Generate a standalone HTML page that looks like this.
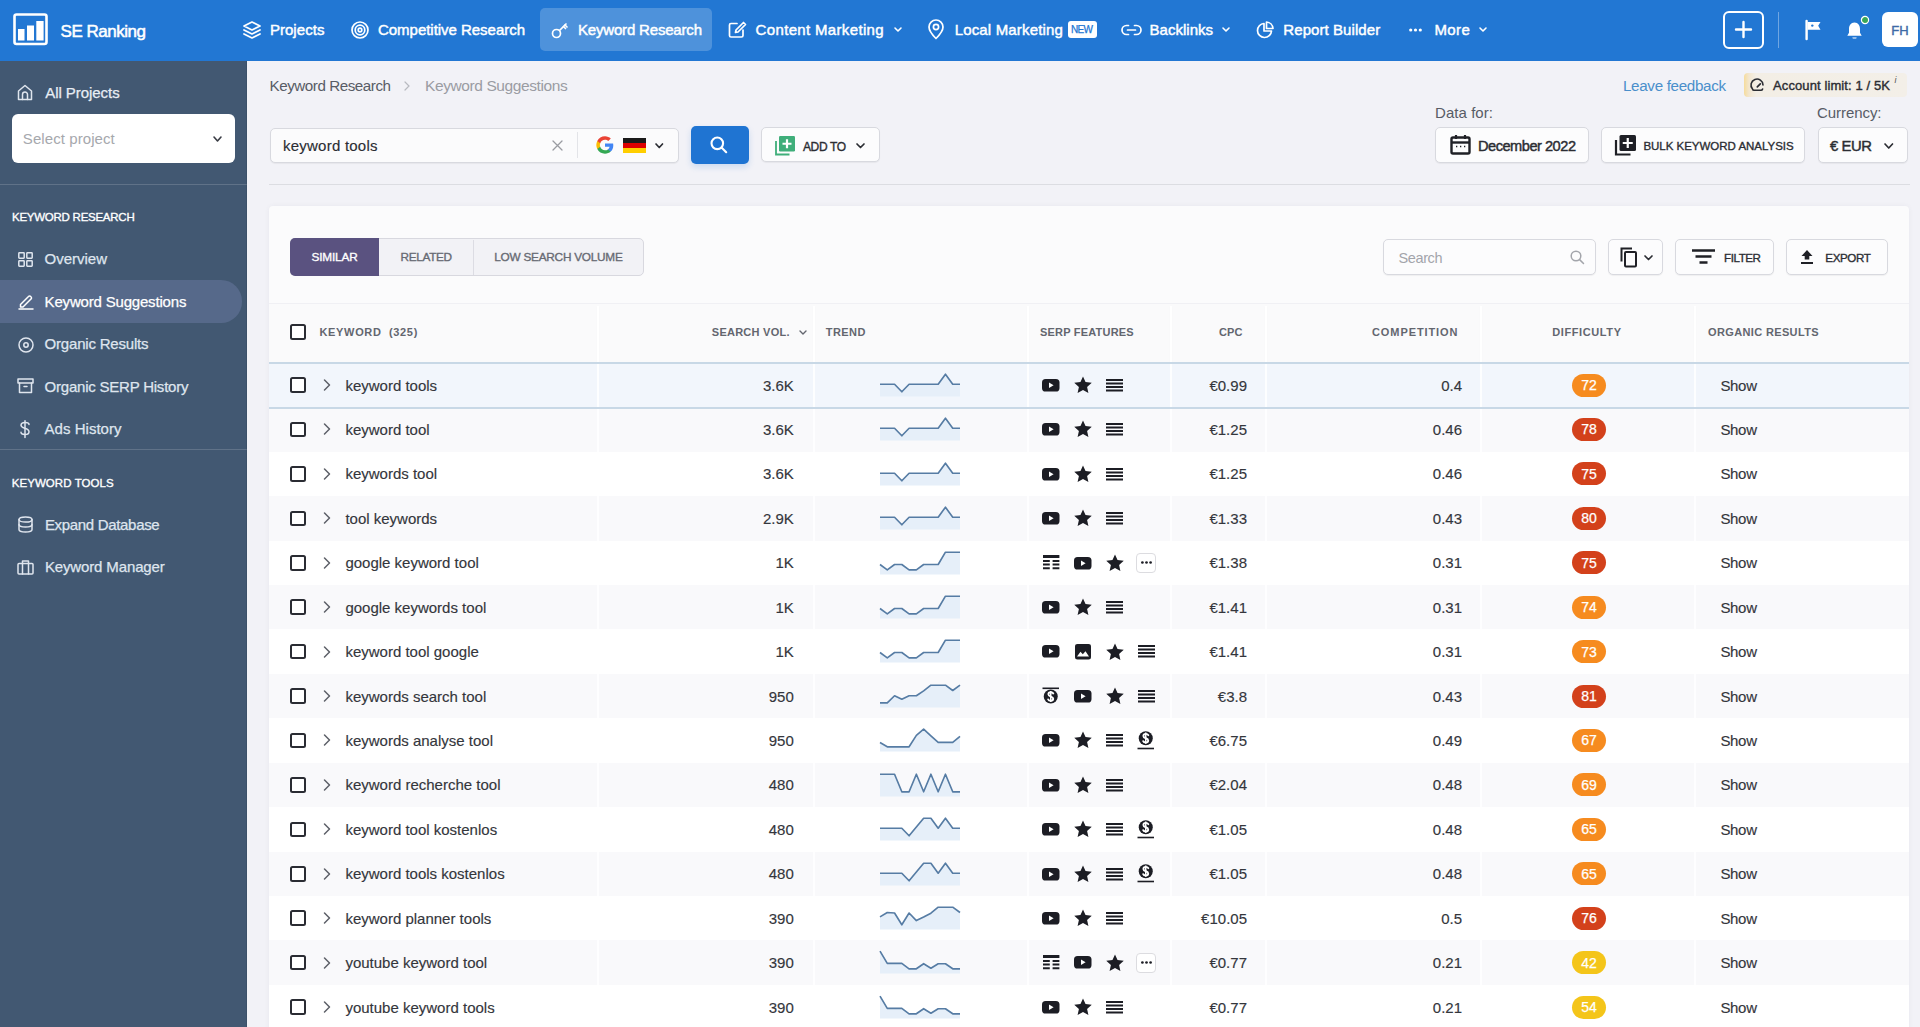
<!DOCTYPE html>
<html><head><meta charset="utf-8"><title>SE Ranking - Keyword Suggestions</title>
<style>
html,body{margin:0;padding:0;}
body{width:1920px;height:1027px;overflow:hidden;position:relative;background:#f2f2f7;font-family:"Liberation Sans",sans-serif;}
svg{display:block;overflow:visible}
</style></head><body>
<div style="position:absolute;left:0px;top:0px;width:1920px;height:61px;background:#2277d3"></div><svg style="position:absolute;left:13px;top:13px;" width="36" height="33" viewBox="0 0 36 33"><rect x="1.5" y="1.5" width="32" height="29.5" rx="2" fill="none" stroke="#fff" stroke-width="2.6"/><rect x="5" y="16" width="6.5" height="11.5" fill="#fff"/><rect x="14" y="12.5" width="7" height="15" fill="#fff"/><rect x="23.3" y="8" width="7.3" height="19.5" fill="#fff"/></svg><span style="position:absolute;left:60.60px;top:23.00px;font-size:17px;line-height:17px;font-weight:400;color:#fff;-webkit-text-stroke:0.51px #fff;letter-spacing:-0.487px;white-space:pre;">SE Ranking</span><div style="position:absolute;left:540px;top:8px;width:172px;height:42.5px;background:rgba(255,255,255,0.2);border-radius:5px"></div><span style="position:absolute;left:269.90px;top:22.00px;font-size:15px;line-height:15px;font-weight:400;color:#fff;-webkit-text-stroke:0.45px #fff;letter-spacing:0.045px;white-space:pre;">Projects</span><span style="position:absolute;left:378.00px;top:22.00px;font-size:15px;line-height:15px;font-weight:400;color:#fff;-webkit-text-stroke:0.45px #fff;letter-spacing:-0.030px;white-space:pre;">Competitive Research</span><span style="position:absolute;left:578.00px;top:22.00px;font-size:15px;line-height:15px;font-weight:400;color:#fff;-webkit-text-stroke:0.45px #fff;letter-spacing:-0.182px;white-space:pre;">Keyword Research</span><span style="position:absolute;left:755.60px;top:22.00px;font-size:15px;line-height:15px;font-weight:400;color:#fff;-webkit-text-stroke:0.45px #fff;letter-spacing:0.339px;white-space:pre;">Content Marketing</span><span style="position:absolute;left:954.70px;top:22.00px;font-size:15px;line-height:15px;font-weight:400;color:#fff;-webkit-text-stroke:0.45px #fff;letter-spacing:0.158px;white-space:pre;">Local Marketing</span><span style="position:absolute;left:1149.60px;top:22.00px;font-size:15px;line-height:15px;font-weight:400;color:#fff;-webkit-text-stroke:0.45px #fff;letter-spacing:0.005px;white-space:pre;">Backlinks</span><span style="position:absolute;left:1283.30px;top:22.00px;font-size:15px;line-height:15px;font-weight:400;color:#fff;-webkit-text-stroke:0.45px #fff;letter-spacing:0.078px;white-space:pre;">Report Builder</span><span style="position:absolute;left:1434.40px;top:22.00px;font-size:15px;line-height:15px;font-weight:400;color:#fff;-webkit-text-stroke:0.45px #fff;letter-spacing:0.404px;white-space:pre;">More</span><svg style="position:absolute;left:242px;top:20px;" width="20" height="20" viewBox="0 0 20 20"><path d="M10 2 L18 6 L10 10 L2 6 Z" fill="none" stroke="#fff" stroke-width="1.7" stroke-linecap="round" stroke-linejoin="round"/><path d="M2 10 L10 14 L18 10" fill="none" stroke="#fff" stroke-width="1.7" stroke-linecap="round" stroke-linejoin="round"/><path d="M2 14 L10 18 L18 14" fill="none" stroke="#fff" stroke-width="1.7" stroke-linecap="round" stroke-linejoin="round"/></svg><svg style="position:absolute;left:351px;top:21px;" width="18" height="18" viewBox="0 0 18 18"><circle cx="9" cy="9" r="8" fill="none" stroke="#fff" stroke-width="1.7" stroke-linecap="round" stroke-linejoin="round"/><circle cx="9" cy="9" r="4.8" fill="none" stroke="#fff" stroke-width="1.7" stroke-linecap="round" stroke-linejoin="round"/><circle cx="9" cy="9" r="1.8" fill="none" stroke="#fff" stroke-width="1.7" stroke-linecap="round" stroke-linejoin="round"/></svg><svg style="position:absolute;left:551px;top:21px;" width="18" height="18" viewBox="0 0 18 18"><circle cx="5.5" cy="12.5" r="4" fill="none" stroke="#fff" stroke-width="1.7" stroke-linecap="round" stroke-linejoin="round"/><path d="M8.5 9.5 L15 3" fill="none" stroke="#fff" stroke-width="1.7" stroke-linecap="round" stroke-linejoin="round"/><path d="M12.5 5.5 L14.5 7.5" fill="none" stroke="#fff" stroke-width="1.7" stroke-linecap="round" stroke-linejoin="round"/><path d="M14 4 L16 6" fill="none" stroke="#fff" stroke-width="1.7" stroke-linecap="round" stroke-linejoin="round"/></svg><svg style="position:absolute;left:728px;top:21px;" width="19" height="17" viewBox="0 0 19 17"><path d="M9 2.5 H3 a1.5 1.5 0 0 0 -1.5 1.5 V14.5 a1.5 1.5 0 0 0 1.5 1.5 H13.5 a1.5 1.5 0 0 0 1.5 -1.5 V9" fill="none" stroke="#fff" stroke-width="1.7" stroke-linecap="round" stroke-linejoin="round"/><path d="M15.5 1.5 L17.5 3.5 L10 11 L7.5 11.5 L8 9 Z" fill="none" stroke="#fff" stroke-width="1.7" stroke-linecap="round" stroke-linejoin="round"/></svg><svg style="position:absolute;left:893.5px;top:27px;" width="8" height="5" viewBox="0 0 8 5"><path d="M1 1 L4.0 4 L7 1" fill="none" stroke="#fff" stroke-width="1.6" stroke-linecap="round" stroke-linejoin="round"/></svg><svg style="position:absolute;left:1221.8px;top:27px;" width="8" height="5" viewBox="0 0 8 5"><path d="M1 1 L4.0 4 L7 1" fill="none" stroke="#fff" stroke-width="1.6" stroke-linecap="round" stroke-linejoin="round"/></svg><svg style="position:absolute;left:1479.2px;top:27px;" width="8" height="5" viewBox="0 0 8 5"><path d="M1 1 L4.0 4 L7 1" fill="none" stroke="#fff" stroke-width="1.6" stroke-linecap="round" stroke-linejoin="round"/></svg><svg style="position:absolute;left:927px;top:19px;" width="18" height="21" viewBox="0 0 18 21"><path d="M9 19.5 C9 19.5 2 12.5 2 8 a7 7 0 0 1 14 0 C16 12.5 9 19.5 9 19.5 Z" fill="none" stroke="#fff" stroke-width="1.7" stroke-linecap="round" stroke-linejoin="round"/><circle cx="9" cy="8" r="2.6" fill="none" stroke="#fff" stroke-width="1.7" stroke-linecap="round" stroke-linejoin="round"/></svg><div style="position:absolute;left:1067.5px;top:21.3px;width:29px;height:16.6px;background:#fff;border-radius:3px"></div><span style="position:absolute;left:1071.00px;top:25.00px;font-size:10px;line-height:10px;font-weight:400;color:#2277d3;-webkit-text-stroke:0.25px #2277d3;letter-spacing:-0.672px;white-space:pre;">NEW</span><svg style="position:absolute;left:1121px;top:24px;" width="21" height="12" viewBox="0 0 21 12"><path d="M7.5 1.5 H5.5 a4.5 4.5 0 0 0 0 9 H7.5" fill="none" stroke="#fff" stroke-width="1.7" stroke-linecap="round" stroke-linejoin="round"/><path d="M13.5 1.5 H15.5 a4.5 4.5 0 0 1 0 9 H13.5" fill="none" stroke="#fff" stroke-width="1.7" stroke-linecap="round" stroke-linejoin="round"/><path d="M6.5 6 H14.5" fill="none" stroke="#fff" stroke-width="1.7" stroke-linecap="round" stroke-linejoin="round"/></svg><svg style="position:absolute;left:1256px;top:21px;" width="18" height="18" viewBox="0 0 18 18"><path d="M8 2.5 A7 7 0 1 0 15.5 10 H8 Z" fill="none" stroke="#fff" stroke-width="1.7" stroke-linecap="round" stroke-linejoin="round"/><path d="M10.5 1 A7 7 0 0 1 17 7.5 H10.5 Z" fill="none" stroke="#fff" stroke-width="1.7" stroke-linecap="round" stroke-linejoin="round"/></svg><svg style="position:absolute;left:1409px;top:27.5px;" width="13" height="4" viewBox="0 0 13 4"><circle cx="1.7" cy="2" r="1.6" fill="#fff"/><circle cx="6.5" cy="2" r="1.6" fill="#fff"/><circle cx="11.3" cy="2" r="1.6" fill="#fff"/></svg><div style="position:absolute;left:1722.5px;top:10.5px;width:41.5px;height:38px;box-sizing:border-box;border:2.5px solid #fff;border-radius:6px"></div><svg style="position:absolute;left:1735px;top:21px;" width="17" height="17" viewBox="0 0 17 17"><path d="M8.5 1 V16 M1 8.5 H16" stroke="#fff" stroke-width="2.4" stroke-linecap="round"/></svg><div style="position:absolute;left:1777.5px;top:11.5px;width:1.2px;height:36px;background:rgba(255,255,255,0.35)"></div><svg style="position:absolute;left:1805px;top:20px;" width="16" height="20" viewBox="0 0 16 20"><path d="M1.6 1 V19" stroke="#fff" stroke-width="2.4" stroke-linecap="round"/><path d="M2.5 2 H15.5 L13.2 5.8 L15.5 9.8 H2.5 Z" fill="#fff"/><circle cx="7.3" cy="5.6" r="1.2" fill="#2277d3"/></svg><svg style="position:absolute;left:1846px;top:20.5px;" width="17" height="19" viewBox="0 0 17 19"><path d="M8.5 1.5 C4.8 1.5 3 4.5 3 8 V11.8 L1.3 14.8 H15.7 L14 11.8 V8 C14 4.5 12.2 1.5 8.5 1.5 Z" fill="#fff"/><path d="M6.3 16.4 H10.7 L10.2 17.6 H6.8 Z" fill="#fff"/></svg><svg style="position:absolute;left:1860px;top:15px;" width="10" height="10" viewBox="0 0 10 10"><circle cx="5" cy="5" r="3.6" fill="#3aa757" stroke="#fff" stroke-width="1.2"/></svg><div style="position:absolute;left:1882.3px;top:11.5px;width:35.5px;height:35.8px;background:#fff;border-radius:6px"></div><span style="position:absolute;left:1891.33px;top:24.00px;font-size:13px;line-height:13px;font-weight:400;color:#3d6aa6;-webkit-text-stroke:0.39px #3d6aa6;letter-spacing:0.000px;white-space:pre;">FH</span><div style="position:absolute;left:0px;top:61px;width:247px;height:966px;background:#425872"></div><svg style="position:absolute;left:17px;top:84px;" width="16" height="17" viewBox="0 0 16 17"><path d="M1.5 7 L8 1.5 L14.5 7 V15.5 H1.5 Z" fill="none" stroke="#dfe5ee" stroke-width="1.5" stroke-linecap="round" stroke-linejoin="round"/><path d="M5.5 15.5 V10.5 a2.5 2.5 0 0 1 5 0 V15.5" fill="none" stroke="#dfe5ee" stroke-width="1.5" stroke-linecap="round" stroke-linejoin="round"/></svg><span style="position:absolute;left:45.20px;top:85.00px;font-size:15px;line-height:15px;font-weight:400;color:#e8edf4;-webkit-text-stroke:0.25px #e8edf4;letter-spacing:-0.048px;white-space:pre;">All Projects</span><div style="position:absolute;left:12px;top:114.3px;width:222.6px;height:48.3px;background:#fff;border-radius:6px"></div><span style="position:absolute;left:22.80px;top:131.00px;font-size:15px;line-height:15px;font-weight:400;color:#a6a8ad;letter-spacing:0.085px;white-space:pre;">Select project</span><svg style="position:absolute;left:213px;top:136px;" width="9" height="6" viewBox="0 0 9 6"><path d="M1 1 L4.5 5 L8 1" fill="none" stroke="#3a3d45" stroke-width="1.6" stroke-linecap="round" stroke-linejoin="round"/></svg><div style="position:absolute;left:0px;top:184px;width:247px;height:1px;background:rgba(255,255,255,0.16)"></div><span style="position:absolute;left:12.00px;top:212.00px;font-size:11.5px;line-height:11.5px;font-weight:400;color:#fff;-webkit-text-stroke:0.34px #fff;letter-spacing:-0.255px;white-space:pre;">KEYWORD RESEARCH</span><div style="position:absolute;left:0px;top:280.4px;width:242px;height:42.4px;background:#56698a;border-radius:0 21px 21px 0"></div><span style="position:absolute;left:44.60px;top:251.00px;font-size:15px;line-height:15px;font-weight:400;color:#dfe5ee;-webkit-text-stroke:0.25px #dfe5ee;letter-spacing:-0.017px;white-space:pre;">Overview</span><span style="position:absolute;left:44.60px;top:294.00px;font-size:15px;line-height:15px;font-weight:400;color:#fff;-webkit-text-stroke:0.25px #fff;letter-spacing:-0.183px;white-space:pre;">Keyword Suggestions</span><span style="position:absolute;left:44.60px;top:336.00px;font-size:15px;line-height:15px;font-weight:400;color:#dfe5ee;-webkit-text-stroke:0.25px #dfe5ee;letter-spacing:-0.201px;white-space:pre;">Organic Results</span><span style="position:absolute;left:44.60px;top:379.00px;font-size:15px;line-height:15px;font-weight:400;color:#dfe5ee;-webkit-text-stroke:0.25px #dfe5ee;letter-spacing:-0.222px;white-space:pre;">Organic SERP History</span><span style="position:absolute;left:44.60px;top:421.00px;font-size:15px;line-height:15px;font-weight:400;color:#dfe5ee;-webkit-text-stroke:0.25px #dfe5ee;letter-spacing:0.021px;white-space:pre;">Ads History</span><svg style="position:absolute;left:18px;top:252px;" width="15" height="15" viewBox="0 0 15 15"><rect x="0.8" y="0.8" width="5.4" height="5.4" rx="0.6" fill="none" stroke="#dfe5ee" stroke-width="1.5" stroke-linecap="round" stroke-linejoin="round"/><rect x="8.8" y="0.8" width="5.4" height="5.4" rx="0.6" fill="none" stroke="#dfe5ee" stroke-width="1.5" stroke-linecap="round" stroke-linejoin="round"/><rect x="0.8" y="8.8" width="5.4" height="5.4" rx="0.6" fill="none" stroke="#dfe5ee" stroke-width="1.5" stroke-linecap="round" stroke-linejoin="round"/><rect x="8.8" y="8.8" width="5.4" height="5.4" rx="0.6" fill="none" stroke="#dfe5ee" stroke-width="1.5" stroke-linecap="round" stroke-linejoin="round"/></svg><svg style="position:absolute;left:17.5px;top:293px;" width="16" height="17" viewBox="0 0 16 17"><path d="M2.5 11.5 L10.5 3.5 a1.5 1.5 0 0 1 2.2 0 L13 3.8 a1.5 1.5 0 0 1 0 2.2 L5 14 H2.5 Z" fill="none" stroke="#fff" stroke-width="1.5" stroke-linecap="round" stroke-linejoin="round"/><path d="M1 16 H15" fill="none" stroke="#fff" stroke-width="1.5" stroke-linecap="round" stroke-linejoin="round"/></svg><svg style="position:absolute;left:17.5px;top:336.5px;" width="16" height="16" viewBox="0 0 16 16"><circle cx="8" cy="8" r="7" fill="none" stroke="#dfe5ee" stroke-width="1.5" stroke-linecap="round" stroke-linejoin="round"/><circle cx="8" cy="8" r="2.2" fill="none" stroke="#dfe5ee" stroke-width="1.5" stroke-linecap="round" stroke-linejoin="round"/></svg><svg style="position:absolute;left:17px;top:378px;" width="17" height="16" viewBox="0 0 17 16"><rect x="1" y="1" width="15" height="4" fill="none" stroke="#dfe5ee" stroke-width="1.5" stroke-linecap="round" stroke-linejoin="round"/><path d="M2.5 5 V14.5 H14.5 V5" fill="none" stroke="#dfe5ee" stroke-width="1.5" stroke-linecap="round" stroke-linejoin="round"/><path d="M7 8.5 H10" fill="none" stroke="#dfe5ee" stroke-width="1.5" stroke-linecap="round" stroke-linejoin="round"/></svg><svg style="position:absolute;left:19px;top:420px;" width="12" height="19" viewBox="0 0 12 19"><path d="M10 4.5 C10 3 8.5 2.5 6 2.5 C3.5 2.5 2 3.5 2 5.3 C2 9 10 7.5 10 11.7 C10 13.7 8.5 14.5 6 14.5 C3.5 14.5 2 13.8 2 12.3" fill="none" stroke="#dfe5ee" stroke-width="1.5" stroke-linecap="round" stroke-linejoin="round"/><path d="M6 0.8 V17.5" fill="none" stroke="#dfe5ee" stroke-width="1.5" stroke-linecap="round" stroke-linejoin="round"/></svg><div style="position:absolute;left:0px;top:449.2px;width:247px;height:1px;background:rgba(255,255,255,0.16)"></div><span style="position:absolute;left:11.70px;top:478.00px;font-size:11.5px;line-height:11.5px;font-weight:400;color:#fff;-webkit-text-stroke:0.34px #fff;letter-spacing:0.068px;white-space:pre;">KEYWORD TOOLS</span><span style="position:absolute;left:44.90px;top:517.00px;font-size:15px;line-height:15px;font-weight:400;color:#dfe5ee;-webkit-text-stroke:0.25px #dfe5ee;letter-spacing:-0.319px;white-space:pre;">Expand Database</span><span style="position:absolute;left:44.90px;top:559.00px;font-size:15px;line-height:15px;font-weight:400;color:#dfe5ee;-webkit-text-stroke:0.25px #dfe5ee;letter-spacing:-0.131px;white-space:pre;">Keyword Manager</span><svg style="position:absolute;left:17.5px;top:516px;" width="15" height="17" viewBox="0 0 15 17"><ellipse cx="7.5" cy="3.5" rx="6.5" ry="2.6" fill="none" stroke="#dfe5ee" stroke-width="1.5" stroke-linecap="round" stroke-linejoin="round"/><path d="M1 3.5 V13.5 C1 15 4 16 7.5 16 C11 16 14 15 14 13.5 V3.5" fill="none" stroke="#dfe5ee" stroke-width="1.5" stroke-linecap="round" stroke-linejoin="round"/><path d="M1 8.5 C1 10 4 11 7.5 11 C11 11 14 10 14 8.5" fill="none" stroke="#dfe5ee" stroke-width="1.5" stroke-linecap="round" stroke-linejoin="round"/></svg><svg style="position:absolute;left:17px;top:560px;" width="17" height="15" viewBox="0 0 17 15"><rect x="1" y="3.5" width="15" height="10.5" rx="1" fill="none" stroke="#dfe5ee" stroke-width="1.5" stroke-linecap="round" stroke-linejoin="round"/><path d="M5.5 3.5 V1 H11.5 V3.5" fill="none" stroke="#dfe5ee" stroke-width="1.5" stroke-linecap="round" stroke-linejoin="round"/><path d="M5.5 3.5 V14 M11.5 3.5 V14" fill="none" stroke="#dfe5ee" stroke-width="1.5" stroke-linecap="round" stroke-linejoin="round"/></svg><div style="position:absolute;left:246px;top:61px;width:1px;height:966px;background:rgba(0,0,0,0.08)"></div><span style="position:absolute;left:269.50px;top:78.00px;font-size:15.2px;line-height:15.2px;font-weight:400;color:#585c66;letter-spacing:-0.454px;white-space:pre;">Keyword Research</span><svg style="position:absolute;left:403.5px;top:80.5px;" width="6" height="10" viewBox="0 0 6 10"><path d="M1 1 L5 5 L1 9" fill="none" stroke="#b8bac0" stroke-width="1.2" stroke-linecap="round"/></svg><span style="position:absolute;left:425.00px;top:78.00px;font-size:15.5px;line-height:15.5px;font-weight:400;color:#9a9ca3;letter-spacing:-0.401px;white-space:pre;">Keyword Suggestions</span><div style="position:absolute;left:269.8px;top:127.5px;width:409.5px;height:35.2px;box-sizing:border-box;background:#fbfbfc;border:1.3px solid #d8d9df;border-radius:5px;box-shadow:0 1px 1px rgba(0,0,0,0.05)"></div><span style="position:absolute;left:283.00px;top:138.00px;font-size:15px;line-height:15px;font-weight:400;color:#2b2d33;-webkit-text-stroke:0.15px #2b2d33;letter-spacing:0.232px;white-space:pre;">keyword tools</span><svg style="position:absolute;left:552px;top:139.5px;" width="11" height="11" viewBox="0 0 11 11"><path d="M1 1 L10 10 M10 1 L1 10" stroke="#9a9ca2" stroke-width="1.3" stroke-linecap="round"/></svg><div style="position:absolute;left:577px;top:132px;width:1px;height:26px;background:#e3e4e8"></div><svg style="position:absolute;left:595.5px;top:136px;" width="18" height="18" viewBox="0 0 18 18"><path d="M17.3 9.2 c0-.6-.1-1.2-.2-1.8 H9 v3.4 h4.6 c-.2 1.1-.8 2-1.7 2.6 v2.2 h2.8 c1.6-1.5 2.6-3.7 2.6-6.4z" fill="#4285F4"/><path d="M9 17.7 c2.3 0 4.3-.8 5.7-2.1 l-2.8-2.2 c-.8.5-1.8.9-2.9.9-2.2 0-4.1-1.5-4.8-3.5 H1.3 v2.3 C2.7 16 5.6 17.7 9 17.7z" fill="#34A853"/><path d="M4.2 10.8 c-.2-.5-.3-1.1-.3-1.8 s.1-1.2.3-1.8 V5 H1.3 C.7 6.2.3 7.6.3 9 s.4 2.8 1 4 l2.9-2.2z" fill="#FBBC05"/><path d="M9 3.8 c1.3 0 2.4.4 3.3 1.3 l2.5-2.5 C13.3 1.2 11.3.3 9 .3 5.6.3 2.7 2 1.3 5 l2.9 2.2 C4.9 5.3 6.8 3.8 9 3.8z" fill="#EA4335"/></svg><div style="position:absolute;left:623px;top:137.5px;width:22.5px;height:5px;background:#1a1a1a"></div><div style="position:absolute;left:623px;top:142.5px;width:22.5px;height:5px;background:#dd0000"></div><div style="position:absolute;left:623px;top:147.5px;width:22.5px;height:5px;background:#ffce00"></div><svg style="position:absolute;left:654.8px;top:142.5px;" width="8.5" height="5.5" viewBox="0 0 8.5 5.5"><path d="M1 1 L4.25 4.5 L7.5 1" fill="none" stroke="#2b2d33" stroke-width="1.7" stroke-linecap="round" stroke-linejoin="round"/></svg><div style="position:absolute;left:691px;top:125.8px;width:58px;height:37.8px;background:#1f74d2;border-radius:5px;box-shadow:0 3px 6px rgba(31,116,210,0.18)"></div><svg style="position:absolute;left:708.5px;top:134.5px;" width="21" height="21" viewBox="0 0 21 21"><circle cx="8.3" cy="8.3" r="5.8" fill="none" stroke="#fff" stroke-width="2.1"/><path d="M12.5 12.5 L17.2 17.2" stroke="#fff" stroke-width="2.1" stroke-linecap="round"/></svg><div style="position:absolute;left:760.8px;top:127px;width:119.2px;height:35.4px;box-sizing:border-box;background:#fcfcfd;border:1.3px solid #d8d9df;border-radius:5px;box-shadow:0 1px 1px rgba(0,0,0,0.05)"></div><svg style="position:absolute;left:773.5px;top:134.5px;" width="22" height="21" viewBox="0 0 22 21"><path d="M2 6 V19.5 H15.5" fill="none" stroke="#3fae7a" stroke-width="1.8"/><rect x="5" y="1" width="16" height="15.5" rx="1.2" fill="#3fae7a"/><path d="M13 4.3 V13.2 M8.5 8.75 H17.5" stroke="#fff" stroke-width="2.2"/></svg><span style="position:absolute;left:803.00px;top:141.00px;font-size:12px;line-height:12px;font-weight:400;color:#2b2d33;-webkit-text-stroke:0.36px #2b2d33;letter-spacing:-0.381px;white-space:pre;">ADD TO</span><svg style="position:absolute;left:856px;top:142.5px;" width="9" height="5.5" viewBox="0 0 9 5.5"><path d="M1 1 L4.5 4.5 L8 1" fill="none" stroke="#2b2d33" stroke-width="1.7" stroke-linecap="round" stroke-linejoin="round"/></svg><span style="position:absolute;left:1623.00px;top:78.00px;font-size:15.2px;line-height:15.2px;font-weight:400;color:#4a8fcb;letter-spacing:-0.327px;white-space:pre;">Leave feedback</span><div style="position:absolute;left:1744px;top:72.5px;width:163px;height:24.2px;background:linear-gradient(90deg,#f6dc9c 0px,#f2e6cf 5px,#f3eee5 12px,#f3efe8 100%);border-radius:4px"></div><svg style="position:absolute;left:1749.5px;top:78px;" width="15" height="14" viewBox="0 0 15 14"><path d="M13 7 A6 6 0 1 0 2.5 11 Q2.8 12.3 4 12.3 H11 Q12.2 12.3 12.6 11" fill="none" stroke="#2b2d33" stroke-width="1.6" stroke-linejoin="round" stroke-linecap="round"/><path d="M7.3 8.8 L10.3 5.8" stroke="#2b2d33" stroke-width="1.7" stroke-linecap="round"/></svg><span style="position:absolute;left:1773.00px;top:79.00px;font-size:13px;line-height:13px;font-weight:400;color:#2b2d33;-webkit-text-stroke:0.39px #2b2d33;letter-spacing:0.105px;white-space:pre;">Account limit: 1 / 5K</span><span style="position:absolute;left:1894.50px;top:76.00px;font-size:9px;line-height:9px;font-weight:400;color:#555;letter-spacing:0.000px;white-space:pre;font-style:italic">i</span><span style="position:absolute;left:1435.00px;top:105.00px;font-size:15px;line-height:15px;font-weight:400;color:#585c66;letter-spacing:0.059px;white-space:pre;">Data for:</span><span style="position:absolute;left:1817.00px;top:105.00px;font-size:15px;line-height:15px;font-weight:400;color:#585c66;letter-spacing:-0.066px;white-space:pre;">Currency:</span><div style="position:absolute;left:1435px;top:127px;width:153.8px;height:35.7px;box-sizing:border-box;background:#fcfcfd;border:1.3px solid #d8d9df;border-radius:5px;box-shadow:0 1px 1px rgba(0,0,0,0.05)"></div><svg style="position:absolute;left:1449.5px;top:134px;" width="21" height="21" viewBox="0 0 21 21"><rect x="1.5" y="3.5" width="18" height="16" rx="1.5" fill="none" stroke="#1f2026" stroke-width="2.4"/><path d="M1.5 8.5 H19.5" stroke="#1f2026" stroke-width="2.4"/><path d="M6 1 V5 M15 1 V5" stroke="#1f2026" stroke-width="2.2"/><path d="M6 12.5 H7.3 M10 12.5 H11.3 M14 12.5 H15.3" stroke="#1f2026" stroke-width="1.6"/></svg><span style="position:absolute;left:1478.00px;top:139.00px;font-size:14.6px;line-height:14.6px;font-weight:400;color:#2b2d33;-webkit-text-stroke:0.44px #2b2d33;letter-spacing:-0.487px;white-space:pre;">December 2022</span><div style="position:absolute;left:1601px;top:127px;width:204px;height:35.7px;box-sizing:border-box;background:#fcfcfd;border:1.3px solid #d8d9df;border-radius:5px;box-shadow:0 1px 1px rgba(0,0,0,0.05)"></div><svg style="position:absolute;left:1613.5px;top:134px;" width="23" height="22" viewBox="0 0 23 22"><path d="M2 6 V20.5 H16.5" fill="none" stroke="#1f2026" stroke-width="2.2"/><rect x="5.5" y="1" width="16.5" height="16" rx="1.5" fill="#1f2026"/><path d="M13.75 4 V14 M8.75 9 H18.75" stroke="#fff" stroke-width="2.2"/></svg><span style="position:absolute;left:1643.40px;top:141.00px;font-size:11.5px;line-height:11.5px;font-weight:400;color:#2b2d33;-webkit-text-stroke:0.34px #2b2d33;letter-spacing:-0.016px;white-space:pre;">BULK KEYWORD ANALYSIS</span><div style="position:absolute;left:1817.7px;top:127px;width:90.3px;height:35.7px;box-sizing:border-box;background:#fcfcfd;border:1.3px solid #d8d9df;border-radius:5px;box-shadow:0 1px 1px rgba(0,0,0,0.05)"></div><span style="position:absolute;left:1830.00px;top:139.00px;font-size:14.8px;line-height:14.8px;font-weight:400;color:#2b2d33;-webkit-text-stroke:0.44px #2b2d33;letter-spacing:-0.398px;white-space:pre;">€ EUR</span><svg style="position:absolute;left:1883.5px;top:142.5px;" width="9.5" height="6" viewBox="0 0 9.5 6"><path d="M1 1 L4.75 5 L8.5 1" fill="none" stroke="#2b2d33" stroke-width="1.7" stroke-linecap="round" stroke-linejoin="round"/></svg><div style="position:absolute;left:269px;top:183.8px;width:1640.5px;height:1.2px;background:#dcdde2"></div><div style="position:absolute;left:269px;top:206px;width:1640px;height:830px;background:#fbfbfc;border-radius:4px;box-shadow:0 0 5px rgba(60,60,100,0.06)"></div><div style="position:absolute;left:290px;top:238.2px;width:354px;height:37.5px;box-sizing:border-box;background:#f2f2f6;border:1px solid #d8d8df;border-radius:5px"></div><div style="position:absolute;left:290px;top:238.2px;width:89.2px;height:37.5px;background:#5a5280;border-radius:5px 0 0 5px"></div><div style="position:absolute;left:472.6px;top:239.5px;width:1px;height:35px;background:#dcdce3"></div><span style="position:absolute;left:311.50px;top:252.00px;font-size:11.8px;line-height:11.8px;font-weight:400;color:#fff;-webkit-text-stroke:0.35px #fff;letter-spacing:-0.167px;white-space:pre;">SIMILAR</span><span style="position:absolute;left:400.60px;top:252.00px;font-size:11.8px;line-height:11.8px;font-weight:400;color:#676a73;-webkit-text-stroke:0.35px #676a73;letter-spacing:-0.341px;white-space:pre;">RELATED</span><span style="position:absolute;left:494.30px;top:252.00px;font-size:11.8px;line-height:11.8px;font-weight:400;color:#676a73;-webkit-text-stroke:0.35px #676a73;letter-spacing:-0.245px;white-space:pre;">LOW SEARCH VOLUME</span><div style="position:absolute;left:1383.3px;top:238.7px;width:213px;height:36.8px;box-sizing:border-box;background:#fcfcfd;border:1.3px solid #d8d9df;border-radius:5px;box-shadow:0 1px 1px rgba(0,0,0,0.05)"></div><span style="position:absolute;left:1398.50px;top:251.00px;font-size:14.5px;line-height:14.5px;font-weight:400;color:#a3a5ab;letter-spacing:-0.391px;white-space:pre;">Search</span><svg style="position:absolute;left:1569.5px;top:249.5px;" width="15" height="15" viewBox="0 0 15 15"><circle cx="6" cy="6" r="4.8" fill="none" stroke="#a3a5ab" stroke-width="1.5"/><path d="M9.6 9.6 L13.5 13.5" stroke="#a3a5ab" stroke-width="1.5" stroke-linecap="round"/></svg><div style="position:absolute;left:1608.4px;top:238.7px;width:55px;height:36.8px;box-sizing:border-box;background:#fcfcfd;border:1.3px solid #d8d9df;border-radius:5px;box-shadow:0 1px 1px rgba(0,0,0,0.05)"></div><svg style="position:absolute;left:1619.5px;top:246.5px;" width="19" height="21" viewBox="0 0 19 21"><path d="M1.5 14.5 V1.5 H12" fill="none" stroke="#1f2026" stroke-width="2"/><rect x="5" y="5" width="11" height="14.5" rx="1" fill="none" stroke="#1f2026" stroke-width="2"/></svg><svg style="position:absolute;left:1643.5px;top:254.5px;" width="9" height="5.5" viewBox="0 0 9 5.5"><path d="M1 1 L4.5 4.5 L8 1" fill="none" stroke="#2b2d33" stroke-width="1.7" stroke-linecap="round" stroke-linejoin="round"/></svg><div style="position:absolute;left:1674.6px;top:238.7px;width:99.4px;height:36.8px;box-sizing:border-box;background:#fcfcfd;border:1.3px solid #d8d9df;border-radius:5px;box-shadow:0 1px 1px rgba(0,0,0,0.05)"></div><svg style="position:absolute;left:1690.5px;top:249px;" width="25" height="17" viewBox="0 0 25 17"><path d="M1 1.5 H24 M4.5 7.5 H20.5 M8.5 13.5 H16.5" stroke="#1f2026" stroke-width="2.3"/></svg><span style="position:absolute;left:1724.00px;top:252.00px;font-size:11.6px;line-height:11.6px;font-weight:400;color:#2b2d33;-webkit-text-stroke:0.35px #2b2d33;letter-spacing:-0.416px;white-space:pre;">FILTER</span><div style="position:absolute;left:1786px;top:238.7px;width:101.7px;height:36.8px;box-sizing:border-box;background:#fcfcfd;border:1.3px solid #d8d9df;border-radius:5px;box-shadow:0 1px 1px rgba(0,0,0,0.05)"></div><svg style="position:absolute;left:1800px;top:249px;" width="14" height="16" viewBox="0 0 14 16"><path d="M7 1 L12.5 7 H9.3 V10.5 H4.7 V7 H1.5 Z" fill="#1f2026"/><path d="M1 14 H13" stroke="#1f2026" stroke-width="2"/></svg><span style="position:absolute;left:1825.30px;top:252.00px;font-size:11.6px;line-height:11.6px;font-weight:400;color:#2b2d33;-webkit-text-stroke:0.35px #2b2d33;letter-spacing:-0.374px;white-space:pre;">EXPORT</span><div style="position:absolute;left:269px;top:303.5px;width:1640px;height:59.30000000000001px;background:#fafafb;box-shadow:0 -1px 0 #f0f0f4"></div><div style="position:absolute;left:597.0px;top:305.5px;width:2px;height:57.30000000000001px;background:#ffffff;box-shadow:0 0 1px rgba(0,0,0,0.04)"></div><div style="position:absolute;left:813.2px;top:305.5px;width:2px;height:57.30000000000001px;background:#ffffff;box-shadow:0 0 1px rgba(0,0,0,0.04)"></div><div style="position:absolute;left:1027.0px;top:305.5px;width:2px;height:57.30000000000001px;background:#ffffff;box-shadow:0 0 1px rgba(0,0,0,0.04)"></div><div style="position:absolute;left:1169.5px;top:305.5px;width:2px;height:57.30000000000001px;background:#ffffff;box-shadow:0 0 1px rgba(0,0,0,0.04)"></div><div style="position:absolute;left:1264.5px;top:305.5px;width:2px;height:57.30000000000001px;background:#ffffff;box-shadow:0 0 1px rgba(0,0,0,0.04)"></div><div style="position:absolute;left:1479.9px;top:305.5px;width:2px;height:57.30000000000001px;background:#ffffff;box-shadow:0 0 1px rgba(0,0,0,0.04)"></div><div style="position:absolute;left:1694.3px;top:305.5px;width:2px;height:57.30000000000001px;background:#ffffff;box-shadow:0 0 1px rgba(0,0,0,0.04)"></div><div style="position:absolute;left:290.3px;top:324.3px;width:15.5px;height:15.5px;box-sizing:border-box;border:2px solid #2a2c33;border-radius:2.5px;background:#fff"></div><span style="position:absolute;left:319.50px;top:327.00px;font-size:11px;line-height:11px;font-weight:700;color:#63666f;letter-spacing:0.658px;white-space:pre;">KEYWORD  (325)</span><span style="position:absolute;left:711.80px;top:327.00px;font-size:11px;line-height:11px;font-weight:700;color:#63666f;letter-spacing:0.251px;white-space:pre;">SEARCH VOL.</span><svg style="position:absolute;left:798.6px;top:329.5px;" width="8" height="5" viewBox="0 0 8 5"><path d="M1 1 L4.0 4 L7 1" fill="none" stroke="#63666f" stroke-width="1.4" stroke-linecap="round" stroke-linejoin="round"/></svg><span style="position:absolute;left:825.70px;top:327.00px;font-size:11px;line-height:11px;font-weight:700;color:#63666f;letter-spacing:0.477px;white-space:pre;">TREND</span><span style="position:absolute;left:1040.00px;top:327.00px;font-size:11px;line-height:11px;font-weight:700;color:#63666f;letter-spacing:0.202px;white-space:pre;">SERP FEATURES</span><span style="position:absolute;left:1219.00px;top:327.00px;font-size:11px;line-height:11px;font-weight:700;color:#63666f;letter-spacing:0.133px;white-space:pre;">CPC</span><span style="position:absolute;left:1372.00px;top:327.00px;font-size:11px;line-height:11px;font-weight:700;color:#63666f;letter-spacing:0.911px;white-space:pre;">COMPETITION</span><span style="position:absolute;left:1552.20px;top:327.00px;font-size:11px;line-height:11px;font-weight:700;color:#63666f;letter-spacing:0.606px;white-space:pre;">DIFFICULTY</span><span style="position:absolute;left:1708.00px;top:327.00px;font-size:11px;line-height:11px;font-weight:700;color:#63666f;letter-spacing:0.362px;white-space:pre;">ORGANIC RESULTS</span><div style="position:absolute;left:269px;top:362.8px;width:1640px;height:44.43px;background:#f2f6fc"></div><div style="position:absolute;left:597.0px;top:362.8px;width:2px;height:44.43px;background:rgba(255,255,255,0.85)"></div><div style="position:absolute;left:813.2px;top:362.8px;width:2px;height:44.43px;background:rgba(255,255,255,0.85)"></div><div style="position:absolute;left:1027.0px;top:362.8px;width:2px;height:44.43px;background:rgba(255,255,255,0.85)"></div><div style="position:absolute;left:1169.5px;top:362.8px;width:2px;height:44.43px;background:rgba(255,255,255,0.85)"></div><div style="position:absolute;left:1264.5px;top:362.8px;width:2px;height:44.43px;background:rgba(255,255,255,0.85)"></div><div style="position:absolute;left:1479.9px;top:362.8px;width:2px;height:44.43px;background:rgba(255,255,255,0.85)"></div><div style="position:absolute;left:1694.3px;top:362.8px;width:2px;height:44.43px;background:rgba(255,255,255,0.85)"></div><div style="position:absolute;left:269px;top:407.23px;width:1640px;height:44.43px;background:#f9f9fb"></div><div style="position:absolute;left:597.0px;top:407.23px;width:2px;height:44.43px;background:rgba(255,255,255,0.85)"></div><div style="position:absolute;left:813.2px;top:407.23px;width:2px;height:44.43px;background:rgba(255,255,255,0.85)"></div><div style="position:absolute;left:1027.0px;top:407.23px;width:2px;height:44.43px;background:rgba(255,255,255,0.85)"></div><div style="position:absolute;left:1169.5px;top:407.23px;width:2px;height:44.43px;background:rgba(255,255,255,0.85)"></div><div style="position:absolute;left:1264.5px;top:407.23px;width:2px;height:44.43px;background:rgba(255,255,255,0.85)"></div><div style="position:absolute;left:1479.9px;top:407.23px;width:2px;height:44.43px;background:rgba(255,255,255,0.85)"></div><div style="position:absolute;left:1694.3px;top:407.23px;width:2px;height:44.43px;background:rgba(255,255,255,0.85)"></div><div style="position:absolute;left:269px;top:451.66px;width:1640px;height:44.43px;background:#ffffff"></div><div style="position:absolute;left:597.0px;top:451.66px;width:2px;height:44.43px;background:rgba(255,255,255,0.85)"></div><div style="position:absolute;left:813.2px;top:451.66px;width:2px;height:44.43px;background:rgba(255,255,255,0.85)"></div><div style="position:absolute;left:1027.0px;top:451.66px;width:2px;height:44.43px;background:rgba(255,255,255,0.85)"></div><div style="position:absolute;left:1169.5px;top:451.66px;width:2px;height:44.43px;background:rgba(255,255,255,0.85)"></div><div style="position:absolute;left:1264.5px;top:451.66px;width:2px;height:44.43px;background:rgba(255,255,255,0.85)"></div><div style="position:absolute;left:1479.9px;top:451.66px;width:2px;height:44.43px;background:rgba(255,255,255,0.85)"></div><div style="position:absolute;left:1694.3px;top:451.66px;width:2px;height:44.43px;background:rgba(255,255,255,0.85)"></div><div style="position:absolute;left:269px;top:496.09000000000003px;width:1640px;height:44.43px;background:#f9f9fb"></div><div style="position:absolute;left:597.0px;top:496.09000000000003px;width:2px;height:44.43px;background:rgba(255,255,255,0.85)"></div><div style="position:absolute;left:813.2px;top:496.09000000000003px;width:2px;height:44.43px;background:rgba(255,255,255,0.85)"></div><div style="position:absolute;left:1027.0px;top:496.09000000000003px;width:2px;height:44.43px;background:rgba(255,255,255,0.85)"></div><div style="position:absolute;left:1169.5px;top:496.09000000000003px;width:2px;height:44.43px;background:rgba(255,255,255,0.85)"></div><div style="position:absolute;left:1264.5px;top:496.09000000000003px;width:2px;height:44.43px;background:rgba(255,255,255,0.85)"></div><div style="position:absolute;left:1479.9px;top:496.09000000000003px;width:2px;height:44.43px;background:rgba(255,255,255,0.85)"></div><div style="position:absolute;left:1694.3px;top:496.09000000000003px;width:2px;height:44.43px;background:rgba(255,255,255,0.85)"></div><div style="position:absolute;left:269px;top:540.52px;width:1640px;height:44.43px;background:#ffffff"></div><div style="position:absolute;left:597.0px;top:540.52px;width:2px;height:44.43px;background:rgba(255,255,255,0.85)"></div><div style="position:absolute;left:813.2px;top:540.52px;width:2px;height:44.43px;background:rgba(255,255,255,0.85)"></div><div style="position:absolute;left:1027.0px;top:540.52px;width:2px;height:44.43px;background:rgba(255,255,255,0.85)"></div><div style="position:absolute;left:1169.5px;top:540.52px;width:2px;height:44.43px;background:rgba(255,255,255,0.85)"></div><div style="position:absolute;left:1264.5px;top:540.52px;width:2px;height:44.43px;background:rgba(255,255,255,0.85)"></div><div style="position:absolute;left:1479.9px;top:540.52px;width:2px;height:44.43px;background:rgba(255,255,255,0.85)"></div><div style="position:absolute;left:1694.3px;top:540.52px;width:2px;height:44.43px;background:rgba(255,255,255,0.85)"></div><div style="position:absolute;left:269px;top:584.95px;width:1640px;height:44.43px;background:#f9f9fb"></div><div style="position:absolute;left:597.0px;top:584.95px;width:2px;height:44.43px;background:rgba(255,255,255,0.85)"></div><div style="position:absolute;left:813.2px;top:584.95px;width:2px;height:44.43px;background:rgba(255,255,255,0.85)"></div><div style="position:absolute;left:1027.0px;top:584.95px;width:2px;height:44.43px;background:rgba(255,255,255,0.85)"></div><div style="position:absolute;left:1169.5px;top:584.95px;width:2px;height:44.43px;background:rgba(255,255,255,0.85)"></div><div style="position:absolute;left:1264.5px;top:584.95px;width:2px;height:44.43px;background:rgba(255,255,255,0.85)"></div><div style="position:absolute;left:1479.9px;top:584.95px;width:2px;height:44.43px;background:rgba(255,255,255,0.85)"></div><div style="position:absolute;left:1694.3px;top:584.95px;width:2px;height:44.43px;background:rgba(255,255,255,0.85)"></div><div style="position:absolute;left:269px;top:629.38px;width:1640px;height:44.43px;background:#ffffff"></div><div style="position:absolute;left:597.0px;top:629.38px;width:2px;height:44.43px;background:rgba(255,255,255,0.85)"></div><div style="position:absolute;left:813.2px;top:629.38px;width:2px;height:44.43px;background:rgba(255,255,255,0.85)"></div><div style="position:absolute;left:1027.0px;top:629.38px;width:2px;height:44.43px;background:rgba(255,255,255,0.85)"></div><div style="position:absolute;left:1169.5px;top:629.38px;width:2px;height:44.43px;background:rgba(255,255,255,0.85)"></div><div style="position:absolute;left:1264.5px;top:629.38px;width:2px;height:44.43px;background:rgba(255,255,255,0.85)"></div><div style="position:absolute;left:1479.9px;top:629.38px;width:2px;height:44.43px;background:rgba(255,255,255,0.85)"></div><div style="position:absolute;left:1694.3px;top:629.38px;width:2px;height:44.43px;background:rgba(255,255,255,0.85)"></div><div style="position:absolute;left:269px;top:673.81px;width:1640px;height:44.43px;background:#f9f9fb"></div><div style="position:absolute;left:597.0px;top:673.81px;width:2px;height:44.43px;background:rgba(255,255,255,0.85)"></div><div style="position:absolute;left:813.2px;top:673.81px;width:2px;height:44.43px;background:rgba(255,255,255,0.85)"></div><div style="position:absolute;left:1027.0px;top:673.81px;width:2px;height:44.43px;background:rgba(255,255,255,0.85)"></div><div style="position:absolute;left:1169.5px;top:673.81px;width:2px;height:44.43px;background:rgba(255,255,255,0.85)"></div><div style="position:absolute;left:1264.5px;top:673.81px;width:2px;height:44.43px;background:rgba(255,255,255,0.85)"></div><div style="position:absolute;left:1479.9px;top:673.81px;width:2px;height:44.43px;background:rgba(255,255,255,0.85)"></div><div style="position:absolute;left:1694.3px;top:673.81px;width:2px;height:44.43px;background:rgba(255,255,255,0.85)"></div><div style="position:absolute;left:269px;top:718.24px;width:1640px;height:44.43px;background:#ffffff"></div><div style="position:absolute;left:597.0px;top:718.24px;width:2px;height:44.43px;background:rgba(255,255,255,0.85)"></div><div style="position:absolute;left:813.2px;top:718.24px;width:2px;height:44.43px;background:rgba(255,255,255,0.85)"></div><div style="position:absolute;left:1027.0px;top:718.24px;width:2px;height:44.43px;background:rgba(255,255,255,0.85)"></div><div style="position:absolute;left:1169.5px;top:718.24px;width:2px;height:44.43px;background:rgba(255,255,255,0.85)"></div><div style="position:absolute;left:1264.5px;top:718.24px;width:2px;height:44.43px;background:rgba(255,255,255,0.85)"></div><div style="position:absolute;left:1479.9px;top:718.24px;width:2px;height:44.43px;background:rgba(255,255,255,0.85)"></div><div style="position:absolute;left:1694.3px;top:718.24px;width:2px;height:44.43px;background:rgba(255,255,255,0.85)"></div><div style="position:absolute;left:269px;top:762.6700000000001px;width:1640px;height:44.43px;background:#f9f9fb"></div><div style="position:absolute;left:597.0px;top:762.6700000000001px;width:2px;height:44.43px;background:rgba(255,255,255,0.85)"></div><div style="position:absolute;left:813.2px;top:762.6700000000001px;width:2px;height:44.43px;background:rgba(255,255,255,0.85)"></div><div style="position:absolute;left:1027.0px;top:762.6700000000001px;width:2px;height:44.43px;background:rgba(255,255,255,0.85)"></div><div style="position:absolute;left:1169.5px;top:762.6700000000001px;width:2px;height:44.43px;background:rgba(255,255,255,0.85)"></div><div style="position:absolute;left:1264.5px;top:762.6700000000001px;width:2px;height:44.43px;background:rgba(255,255,255,0.85)"></div><div style="position:absolute;left:1479.9px;top:762.6700000000001px;width:2px;height:44.43px;background:rgba(255,255,255,0.85)"></div><div style="position:absolute;left:1694.3px;top:762.6700000000001px;width:2px;height:44.43px;background:rgba(255,255,255,0.85)"></div><div style="position:absolute;left:269px;top:807.1px;width:1640px;height:44.43px;background:#ffffff"></div><div style="position:absolute;left:597.0px;top:807.1px;width:2px;height:44.43px;background:rgba(255,255,255,0.85)"></div><div style="position:absolute;left:813.2px;top:807.1px;width:2px;height:44.43px;background:rgba(255,255,255,0.85)"></div><div style="position:absolute;left:1027.0px;top:807.1px;width:2px;height:44.43px;background:rgba(255,255,255,0.85)"></div><div style="position:absolute;left:1169.5px;top:807.1px;width:2px;height:44.43px;background:rgba(255,255,255,0.85)"></div><div style="position:absolute;left:1264.5px;top:807.1px;width:2px;height:44.43px;background:rgba(255,255,255,0.85)"></div><div style="position:absolute;left:1479.9px;top:807.1px;width:2px;height:44.43px;background:rgba(255,255,255,0.85)"></div><div style="position:absolute;left:1694.3px;top:807.1px;width:2px;height:44.43px;background:rgba(255,255,255,0.85)"></div><div style="position:absolute;left:269px;top:851.53px;width:1640px;height:44.43px;background:#f9f9fb"></div><div style="position:absolute;left:597.0px;top:851.53px;width:2px;height:44.43px;background:rgba(255,255,255,0.85)"></div><div style="position:absolute;left:813.2px;top:851.53px;width:2px;height:44.43px;background:rgba(255,255,255,0.85)"></div><div style="position:absolute;left:1027.0px;top:851.53px;width:2px;height:44.43px;background:rgba(255,255,255,0.85)"></div><div style="position:absolute;left:1169.5px;top:851.53px;width:2px;height:44.43px;background:rgba(255,255,255,0.85)"></div><div style="position:absolute;left:1264.5px;top:851.53px;width:2px;height:44.43px;background:rgba(255,255,255,0.85)"></div><div style="position:absolute;left:1479.9px;top:851.53px;width:2px;height:44.43px;background:rgba(255,255,255,0.85)"></div><div style="position:absolute;left:1694.3px;top:851.53px;width:2px;height:44.43px;background:rgba(255,255,255,0.85)"></div><div style="position:absolute;left:269px;top:895.96px;width:1640px;height:44.43px;background:#ffffff"></div><div style="position:absolute;left:597.0px;top:895.96px;width:2px;height:44.43px;background:rgba(255,255,255,0.85)"></div><div style="position:absolute;left:813.2px;top:895.96px;width:2px;height:44.43px;background:rgba(255,255,255,0.85)"></div><div style="position:absolute;left:1027.0px;top:895.96px;width:2px;height:44.43px;background:rgba(255,255,255,0.85)"></div><div style="position:absolute;left:1169.5px;top:895.96px;width:2px;height:44.43px;background:rgba(255,255,255,0.85)"></div><div style="position:absolute;left:1264.5px;top:895.96px;width:2px;height:44.43px;background:rgba(255,255,255,0.85)"></div><div style="position:absolute;left:1479.9px;top:895.96px;width:2px;height:44.43px;background:rgba(255,255,255,0.85)"></div><div style="position:absolute;left:1694.3px;top:895.96px;width:2px;height:44.43px;background:rgba(255,255,255,0.85)"></div><div style="position:absolute;left:269px;top:940.3900000000001px;width:1640px;height:44.43px;background:#f9f9fb"></div><div style="position:absolute;left:597.0px;top:940.3900000000001px;width:2px;height:44.43px;background:rgba(255,255,255,0.85)"></div><div style="position:absolute;left:813.2px;top:940.3900000000001px;width:2px;height:44.43px;background:rgba(255,255,255,0.85)"></div><div style="position:absolute;left:1027.0px;top:940.3900000000001px;width:2px;height:44.43px;background:rgba(255,255,255,0.85)"></div><div style="position:absolute;left:1169.5px;top:940.3900000000001px;width:2px;height:44.43px;background:rgba(255,255,255,0.85)"></div><div style="position:absolute;left:1264.5px;top:940.3900000000001px;width:2px;height:44.43px;background:rgba(255,255,255,0.85)"></div><div style="position:absolute;left:1479.9px;top:940.3900000000001px;width:2px;height:44.43px;background:rgba(255,255,255,0.85)"></div><div style="position:absolute;left:1694.3px;top:940.3900000000001px;width:2px;height:44.43px;background:rgba(255,255,255,0.85)"></div><div style="position:absolute;left:269px;top:984.8199999999999px;width:1640px;height:44.43px;background:#ffffff"></div><div style="position:absolute;left:597.0px;top:984.8199999999999px;width:2px;height:44.43px;background:rgba(255,255,255,0.85)"></div><div style="position:absolute;left:813.2px;top:984.8199999999999px;width:2px;height:44.43px;background:rgba(255,255,255,0.85)"></div><div style="position:absolute;left:1027.0px;top:984.8199999999999px;width:2px;height:44.43px;background:rgba(255,255,255,0.85)"></div><div style="position:absolute;left:1169.5px;top:984.8199999999999px;width:2px;height:44.43px;background:rgba(255,255,255,0.85)"></div><div style="position:absolute;left:1264.5px;top:984.8199999999999px;width:2px;height:44.43px;background:rgba(255,255,255,0.85)"></div><div style="position:absolute;left:1479.9px;top:984.8199999999999px;width:2px;height:44.43px;background:rgba(255,255,255,0.85)"></div><div style="position:absolute;left:1694.3px;top:984.8199999999999px;width:2px;height:44.43px;background:rgba(255,255,255,0.85)"></div><div style="position:absolute;left:269px;top:362.0px;width:1640px;height:2px;background:#c8d8e6"></div><div style="position:absolute;left:269px;top:406.63px;width:1640px;height:2px;background:#c8d8e6"></div><div style="position:absolute;left:290.3px;top:377.315px;width:15.5px;height:15.5px;box-sizing:border-box;border:2px solid #2a2c33;border-radius:2.5px;background:#fff"></div><svg style="position:absolute;left:322.5px;top:379.015px;" width="8" height="12" viewBox="0 0 8 12"><path d="M1.5 1 L6.5 6 L1.5 11" fill="none" stroke="#5d6068" stroke-width="1.5" stroke-linecap="round" stroke-linejoin="round"/></svg><span style="position:absolute;left:345.40px;top:378.00px;font-size:15px;line-height:15px;font-weight:400;color:#34363c;-webkit-text-stroke:0.15px #34363c;letter-spacing:0.000px;white-space:pre;">keyword tools</span><span style="position:absolute;left:762.94px;top:378.00px;font-size:15px;line-height:15px;font-weight:400;color:#34363c;-webkit-text-stroke:0.15px #34363c;letter-spacing:0.000px;white-space:pre;">3.6K</span><svg style="position:absolute;left:880px;top:373.815px;" width="80" height="23" viewBox="0 0 80 23"><polygon points="0,22.5 0.00,10.23 7.27,10.23 14.55,10.23 21.82,17.80 29.09,10.23 36.36,10.23 43.64,10.23 50.91,10.23 58.18,10.23 65.45,0.20 72.73,10.23 80.00,10.23 80,22.5" fill="#e6eff9"/><polyline points="0.00,10.23 7.27,10.23 14.55,10.23 21.82,17.80 29.09,10.23 36.36,10.23 43.64,10.23 50.91,10.23 58.18,10.23 65.45,0.20 72.73,10.23 80.00,10.23" fill="none" stroke="#567ca4" stroke-width="1.65" stroke-linejoin="round"/></svg><svg style="position:absolute;left:1042.45px;top:378.815px;" width="17.5" height="12.5" viewBox="0 0 17.5 12.5"><rect x="0" y="0" width="17.5" height="12.5" rx="3.6" fill="#1c1d24"/><path d="M7 3.6 L11.6 6.25 L7 8.9 Z" fill="#fff"/></svg><svg style="position:absolute;left:1074px;top:376.015px;" width="18" height="18" viewBox="0 0 18 18"><polygon points="9.00,0.40 11.53,6.12 17.75,6.76 13.09,10.93 14.41,17.04 9.00,13.90 3.59,17.04 4.91,10.93 0.25,6.76 6.47,6.12" fill="#1c1d24"/></svg><svg style="position:absolute;left:1106.1px;top:378.815px;" width="17" height="12.5" viewBox="0 0 17 12.5"><path d="M0 1 H17 M0 4.5 H17 M0 8 H17 M0 11.5 H17" stroke="#1c1d24" stroke-width="2"/></svg><span style="position:absolute;left:1209.45px;top:378.00px;font-size:15px;line-height:15px;font-weight:400;color:#34363c;-webkit-text-stroke:0.15px #34363c;letter-spacing:0.000px;white-space:pre;">€0.99</span><span style="position:absolute;left:1441.14px;top:378.00px;font-size:15px;line-height:15px;font-weight:400;color:#34363c;-webkit-text-stroke:0.15px #34363c;letter-spacing:0.000px;white-space:pre;">0.4</span><div style="position:absolute;left:1572px;top:373.515px;width:34.2px;height:23px;background:#f68b1f;border-radius:11.5px"></div><span style="position:absolute;left:1581.31px;top:378.00px;font-size:14px;line-height:14px;font-weight:400;color:#fff;-webkit-text-stroke:0.25px #fff;letter-spacing:0.000px;white-space:pre;">72</span><span style="position:absolute;left:1720.40px;top:378.00px;font-size:15px;line-height:15px;font-weight:400;color:#34363c;-webkit-text-stroke:0.15px #34363c;letter-spacing:-0.310px;white-space:pre;">Show</span><div style="position:absolute;left:290.3px;top:421.745px;width:15.5px;height:15.5px;box-sizing:border-box;border:2px solid #2a2c33;border-radius:2.5px;background:#fff"></div><svg style="position:absolute;left:322.5px;top:423.445px;" width="8" height="12" viewBox="0 0 8 12"><path d="M1.5 1 L6.5 6 L1.5 11" fill="none" stroke="#5d6068" stroke-width="1.5" stroke-linecap="round" stroke-linejoin="round"/></svg><span style="position:absolute;left:345.40px;top:422.00px;font-size:15px;line-height:15px;font-weight:400;color:#34363c;-webkit-text-stroke:0.15px #34363c;letter-spacing:0.000px;white-space:pre;">keyword tool</span><span style="position:absolute;left:762.94px;top:422.00px;font-size:15px;line-height:15px;font-weight:400;color:#34363c;-webkit-text-stroke:0.15px #34363c;letter-spacing:0.000px;white-space:pre;">3.6K</span><svg style="position:absolute;left:880px;top:418.245px;" width="80" height="23" viewBox="0 0 80 23"><polygon points="0,22.5 0.00,10.23 7.27,10.23 14.55,10.23 21.82,17.80 29.09,10.23 36.36,10.23 43.64,10.23 50.91,10.23 58.18,10.23 65.45,0.20 72.73,10.23 80.00,10.23 80,22.5" fill="#e6eff9"/><polyline points="0.00,10.23 7.27,10.23 14.55,10.23 21.82,17.80 29.09,10.23 36.36,10.23 43.64,10.23 50.91,10.23 58.18,10.23 65.45,0.20 72.73,10.23 80.00,10.23" fill="none" stroke="#567ca4" stroke-width="1.65" stroke-linejoin="round"/></svg><svg style="position:absolute;left:1042.45px;top:423.245px;" width="17.5" height="12.5" viewBox="0 0 17.5 12.5"><rect x="0" y="0" width="17.5" height="12.5" rx="3.6" fill="#1c1d24"/><path d="M7 3.6 L11.6 6.25 L7 8.9 Z" fill="#fff"/></svg><svg style="position:absolute;left:1074px;top:420.445px;" width="18" height="18" viewBox="0 0 18 18"><polygon points="9.00,0.40 11.53,6.12 17.75,6.76 13.09,10.93 14.41,17.04 9.00,13.90 3.59,17.04 4.91,10.93 0.25,6.76 6.47,6.12" fill="#1c1d24"/></svg><svg style="position:absolute;left:1106.1px;top:423.245px;" width="17" height="12.5" viewBox="0 0 17 12.5"><path d="M0 1 H17 M0 4.5 H17 M0 8 H17 M0 11.5 H17" stroke="#1c1d24" stroke-width="2"/></svg><span style="position:absolute;left:1209.45px;top:422.00px;font-size:15px;line-height:15px;font-weight:400;color:#34363c;-webkit-text-stroke:0.15px #34363c;letter-spacing:0.000px;white-space:pre;">€1.25</span><span style="position:absolute;left:1432.80px;top:422.00px;font-size:15px;line-height:15px;font-weight:400;color:#34363c;-webkit-text-stroke:0.15px #34363c;letter-spacing:0.000px;white-space:pre;">0.46</span><div style="position:absolute;left:1572px;top:417.945px;width:34.2px;height:23px;background:#d3411b;border-radius:11.5px"></div><span style="position:absolute;left:1581.31px;top:422.00px;font-size:14px;line-height:14px;font-weight:400;color:#fff;-webkit-text-stroke:0.25px #fff;letter-spacing:0.000px;white-space:pre;">78</span><span style="position:absolute;left:1720.40px;top:422.00px;font-size:15px;line-height:15px;font-weight:400;color:#34363c;-webkit-text-stroke:0.15px #34363c;letter-spacing:-0.310px;white-space:pre;">Show</span><div style="position:absolute;left:290.3px;top:466.175px;width:15.5px;height:15.5px;box-sizing:border-box;border:2px solid #2a2c33;border-radius:2.5px;background:#fff"></div><svg style="position:absolute;left:322.5px;top:467.875px;" width="8" height="12" viewBox="0 0 8 12"><path d="M1.5 1 L6.5 6 L1.5 11" fill="none" stroke="#5d6068" stroke-width="1.5" stroke-linecap="round" stroke-linejoin="round"/></svg><span style="position:absolute;left:345.40px;top:466.00px;font-size:15px;line-height:15px;font-weight:400;color:#34363c;-webkit-text-stroke:0.15px #34363c;letter-spacing:0.000px;white-space:pre;">keywords tool</span><span style="position:absolute;left:762.94px;top:466.00px;font-size:15px;line-height:15px;font-weight:400;color:#34363c;-webkit-text-stroke:0.15px #34363c;letter-spacing:0.000px;white-space:pre;">3.6K</span><svg style="position:absolute;left:880px;top:462.675px;" width="80" height="23" viewBox="0 0 80 23"><polygon points="0,22.5 0.00,10.23 7.27,10.23 14.55,10.23 21.82,17.80 29.09,10.23 36.36,10.23 43.64,10.23 50.91,10.23 58.18,10.23 65.45,0.20 72.73,10.23 80.00,10.23 80,22.5" fill="#e6eff9"/><polyline points="0.00,10.23 7.27,10.23 14.55,10.23 21.82,17.80 29.09,10.23 36.36,10.23 43.64,10.23 50.91,10.23 58.18,10.23 65.45,0.20 72.73,10.23 80.00,10.23" fill="none" stroke="#567ca4" stroke-width="1.65" stroke-linejoin="round"/></svg><svg style="position:absolute;left:1042.45px;top:467.675px;" width="17.5" height="12.5" viewBox="0 0 17.5 12.5"><rect x="0" y="0" width="17.5" height="12.5" rx="3.6" fill="#1c1d24"/><path d="M7 3.6 L11.6 6.25 L7 8.9 Z" fill="#fff"/></svg><svg style="position:absolute;left:1074px;top:464.875px;" width="18" height="18" viewBox="0 0 18 18"><polygon points="9.00,0.40 11.53,6.12 17.75,6.76 13.09,10.93 14.41,17.04 9.00,13.90 3.59,17.04 4.91,10.93 0.25,6.76 6.47,6.12" fill="#1c1d24"/></svg><svg style="position:absolute;left:1106.1px;top:467.675px;" width="17" height="12.5" viewBox="0 0 17 12.5"><path d="M0 1 H17 M0 4.5 H17 M0 8 H17 M0 11.5 H17" stroke="#1c1d24" stroke-width="2"/></svg><span style="position:absolute;left:1209.45px;top:466.00px;font-size:15px;line-height:15px;font-weight:400;color:#34363c;-webkit-text-stroke:0.15px #34363c;letter-spacing:0.000px;white-space:pre;">€1.25</span><span style="position:absolute;left:1432.80px;top:466.00px;font-size:15px;line-height:15px;font-weight:400;color:#34363c;-webkit-text-stroke:0.15px #34363c;letter-spacing:0.000px;white-space:pre;">0.46</span><div style="position:absolute;left:1572px;top:462.375px;width:34.2px;height:23px;background:#d3411b;border-radius:11.5px"></div><span style="position:absolute;left:1581.31px;top:467.00px;font-size:14px;line-height:14px;font-weight:400;color:#fff;-webkit-text-stroke:0.25px #fff;letter-spacing:0.000px;white-space:pre;">75</span><span style="position:absolute;left:1720.40px;top:466.00px;font-size:15px;line-height:15px;font-weight:400;color:#34363c;-webkit-text-stroke:0.15px #34363c;letter-spacing:-0.310px;white-space:pre;">Show</span><div style="position:absolute;left:290.3px;top:510.6050000000001px;width:15.5px;height:15.5px;box-sizing:border-box;border:2px solid #2a2c33;border-radius:2.5px;background:#fff"></div><svg style="position:absolute;left:322.5px;top:512.3050000000001px;" width="8" height="12" viewBox="0 0 8 12"><path d="M1.5 1 L6.5 6 L1.5 11" fill="none" stroke="#5d6068" stroke-width="1.5" stroke-linecap="round" stroke-linejoin="round"/></svg><span style="position:absolute;left:345.40px;top:511.00px;font-size:15px;line-height:15px;font-weight:400;color:#34363c;-webkit-text-stroke:0.15px #34363c;letter-spacing:0.000px;white-space:pre;">tool keywords</span><span style="position:absolute;left:762.94px;top:511.00px;font-size:15px;line-height:15px;font-weight:400;color:#34363c;-webkit-text-stroke:0.15px #34363c;letter-spacing:0.000px;white-space:pre;">2.9K</span><svg style="position:absolute;left:880px;top:507.1050000000001px;" width="80" height="23" viewBox="0 0 80 23"><polygon points="0,22.5 0.00,10.23 7.27,10.23 14.55,10.23 21.82,17.80 29.09,10.23 36.36,10.23 43.64,10.23 50.91,10.23 58.18,10.23 65.45,0.20 72.73,10.23 80.00,10.23 80,22.5" fill="#e6eff9"/><polyline points="0.00,10.23 7.27,10.23 14.55,10.23 21.82,17.80 29.09,10.23 36.36,10.23 43.64,10.23 50.91,10.23 58.18,10.23 65.45,0.20 72.73,10.23 80.00,10.23" fill="none" stroke="#567ca4" stroke-width="1.65" stroke-linejoin="round"/></svg><svg style="position:absolute;left:1042.45px;top:512.105px;" width="17.5" height="12.5" viewBox="0 0 17.5 12.5"><rect x="0" y="0" width="17.5" height="12.5" rx="3.6" fill="#1c1d24"/><path d="M7 3.6 L11.6 6.25 L7 8.9 Z" fill="#fff"/></svg><svg style="position:absolute;left:1074px;top:509.30500000000006px;" width="18" height="18" viewBox="0 0 18 18"><polygon points="9.00,0.40 11.53,6.12 17.75,6.76 13.09,10.93 14.41,17.04 9.00,13.90 3.59,17.04 4.91,10.93 0.25,6.76 6.47,6.12" fill="#1c1d24"/></svg><svg style="position:absolute;left:1106.1px;top:512.105px;" width="17" height="12.5" viewBox="0 0 17 12.5"><path d="M0 1 H17 M0 4.5 H17 M0 8 H17 M0 11.5 H17" stroke="#1c1d24" stroke-width="2"/></svg><span style="position:absolute;left:1209.45px;top:511.00px;font-size:15px;line-height:15px;font-weight:400;color:#34363c;-webkit-text-stroke:0.15px #34363c;letter-spacing:0.000px;white-space:pre;">€1.33</span><span style="position:absolute;left:1432.80px;top:511.00px;font-size:15px;line-height:15px;font-weight:400;color:#34363c;-webkit-text-stroke:0.15px #34363c;letter-spacing:0.000px;white-space:pre;">0.43</span><div style="position:absolute;left:1572px;top:506.80500000000006px;width:34.2px;height:23px;background:#d3411b;border-radius:11.5px"></div><span style="position:absolute;left:1581.31px;top:511.00px;font-size:14px;line-height:14px;font-weight:400;color:#fff;-webkit-text-stroke:0.25px #fff;letter-spacing:0.000px;white-space:pre;">80</span><span style="position:absolute;left:1720.40px;top:511.00px;font-size:15px;line-height:15px;font-weight:400;color:#34363c;-webkit-text-stroke:0.15px #34363c;letter-spacing:-0.310px;white-space:pre;">Show</span><div style="position:absolute;left:290.3px;top:555.035px;width:15.5px;height:15.5px;box-sizing:border-box;border:2px solid #2a2c33;border-radius:2.5px;background:#fff"></div><svg style="position:absolute;left:322.5px;top:556.735px;" width="8" height="12" viewBox="0 0 8 12"><path d="M1.5 1 L6.5 6 L1.5 11" fill="none" stroke="#5d6068" stroke-width="1.5" stroke-linecap="round" stroke-linejoin="round"/></svg><span style="position:absolute;left:345.40px;top:555.00px;font-size:15px;line-height:15px;font-weight:400;color:#34363c;-webkit-text-stroke:0.15px #34363c;letter-spacing:0.000px;white-space:pre;">google keyword tool</span><span style="position:absolute;left:775.44px;top:555.00px;font-size:15px;line-height:15px;font-weight:400;color:#34363c;-webkit-text-stroke:0.15px #34363c;letter-spacing:0.000px;white-space:pre;">1K</span><svg style="position:absolute;left:880px;top:551.535px;" width="80" height="23" viewBox="0 0 80 23"><polygon points="0,22.5 0.00,12.52 7.27,17.80 14.55,12.52 21.82,12.52 29.09,17.80 36.36,17.80 43.64,12.52 50.91,12.52 58.18,12.52 65.45,0.20 72.73,0.20 80.00,0.20 80,22.5" fill="#e6eff9"/><polyline points="0.00,12.52 7.27,17.80 14.55,12.52 21.82,12.52 29.09,17.80 36.36,17.80 43.64,12.52 50.91,12.52 58.18,12.52 65.45,0.20 72.73,0.20 80.00,0.20" fill="none" stroke="#567ca4" stroke-width="1.65" stroke-linejoin="round"/></svg><svg style="position:absolute;left:1043.0px;top:555.4350000000001px;" width="16.4" height="14.5" viewBox="0 0 16.4 14.5"><rect x="0" y="0" width="16.4" height="3" fill="#1c1d24"/><path d="M0 6 H6.8 M9.6 6 H16.4 M0 9.6 H6.8 M9.6 9.6 H16.4 M0 13.2 H6.8 M9.6 13.2 H16.4" stroke="#1c1d24" stroke-width="2"/></svg><svg style="position:absolute;left:1074.25px;top:556.535px;" width="17.5" height="12.5" viewBox="0 0 17.5 12.5"><rect x="0" y="0" width="17.5" height="12.5" rx="3.6" fill="#1c1d24"/><path d="M7 3.6 L11.6 6.25 L7 8.9 Z" fill="#fff"/></svg><svg style="position:absolute;left:1105.6px;top:553.735px;" width="18" height="18" viewBox="0 0 18 18"><polygon points="9.00,0.40 11.53,6.12 17.75,6.76 13.09,10.93 14.41,17.04 9.00,13.90 3.59,17.04 4.91,10.93 0.25,6.76 6.47,6.12" fill="#1c1d24"/></svg><div style="position:absolute;left:1136.4px;top:552.735px;width:19.3px;height:20px;box-sizing:border-box;border:1.8px solid #dcdce0;border-radius:4px;background:#fff"></div><svg style="position:absolute;left:1140.5px;top:561.235px;" width="11" height="3" viewBox="0 0 11 3"><circle cx="1.4" cy="1.5" r="1.35" fill="#1c1d24"/><circle cx="5.5" cy="1.5" r="1.35" fill="#1c1d24"/><circle cx="9.6" cy="1.5" r="1.35" fill="#1c1d24"/></svg><span style="position:absolute;left:1209.45px;top:555.00px;font-size:15px;line-height:15px;font-weight:400;color:#34363c;-webkit-text-stroke:0.15px #34363c;letter-spacing:0.000px;white-space:pre;">€1.38</span><span style="position:absolute;left:1432.80px;top:555.00px;font-size:15px;line-height:15px;font-weight:400;color:#34363c;-webkit-text-stroke:0.15px #34363c;letter-spacing:0.000px;white-space:pre;">0.31</span><div style="position:absolute;left:1572px;top:551.235px;width:34.2px;height:23px;background:#d3411b;border-radius:11.5px"></div><span style="position:absolute;left:1581.31px;top:556.00px;font-size:14px;line-height:14px;font-weight:400;color:#fff;-webkit-text-stroke:0.25px #fff;letter-spacing:0.000px;white-space:pre;">75</span><span style="position:absolute;left:1720.40px;top:555.00px;font-size:15px;line-height:15px;font-weight:400;color:#34363c;-webkit-text-stroke:0.15px #34363c;letter-spacing:-0.310px;white-space:pre;">Show</span><div style="position:absolute;left:290.3px;top:599.465px;width:15.5px;height:15.5px;box-sizing:border-box;border:2px solid #2a2c33;border-radius:2.5px;background:#fff"></div><svg style="position:absolute;left:322.5px;top:601.1650000000001px;" width="8" height="12" viewBox="0 0 8 12"><path d="M1.5 1 L6.5 6 L1.5 11" fill="none" stroke="#5d6068" stroke-width="1.5" stroke-linecap="round" stroke-linejoin="round"/></svg><span style="position:absolute;left:345.40px;top:600.00px;font-size:15px;line-height:15px;font-weight:400;color:#34363c;-webkit-text-stroke:0.15px #34363c;letter-spacing:0.000px;white-space:pre;">google keywords tool</span><span style="position:absolute;left:775.44px;top:600.00px;font-size:15px;line-height:15px;font-weight:400;color:#34363c;-webkit-text-stroke:0.15px #34363c;letter-spacing:0.000px;white-space:pre;">1K</span><svg style="position:absolute;left:880px;top:595.965px;" width="80" height="23" viewBox="0 0 80 23"><polygon points="0,22.5 0.00,12.52 7.27,17.80 14.55,12.52 21.82,12.52 29.09,17.80 36.36,17.80 43.64,12.52 50.91,12.52 58.18,12.52 65.45,0.20 72.73,0.20 80.00,0.20 80,22.5" fill="#e6eff9"/><polyline points="0.00,12.52 7.27,17.80 14.55,12.52 21.82,12.52 29.09,17.80 36.36,17.80 43.64,12.52 50.91,12.52 58.18,12.52 65.45,0.20 72.73,0.20 80.00,0.20" fill="none" stroke="#567ca4" stroke-width="1.65" stroke-linejoin="round"/></svg><svg style="position:absolute;left:1042.45px;top:600.965px;" width="17.5" height="12.5" viewBox="0 0 17.5 12.5"><rect x="0" y="0" width="17.5" height="12.5" rx="3.6" fill="#1c1d24"/><path d="M7 3.6 L11.6 6.25 L7 8.9 Z" fill="#fff"/></svg><svg style="position:absolute;left:1074px;top:598.1650000000001px;" width="18" height="18" viewBox="0 0 18 18"><polygon points="9.00,0.40 11.53,6.12 17.75,6.76 13.09,10.93 14.41,17.04 9.00,13.90 3.59,17.04 4.91,10.93 0.25,6.76 6.47,6.12" fill="#1c1d24"/></svg><svg style="position:absolute;left:1106.1px;top:600.965px;" width="17" height="12.5" viewBox="0 0 17 12.5"><path d="M0 1 H17 M0 4.5 H17 M0 8 H17 M0 11.5 H17" stroke="#1c1d24" stroke-width="2"/></svg><span style="position:absolute;left:1209.45px;top:600.00px;font-size:15px;line-height:15px;font-weight:400;color:#34363c;-webkit-text-stroke:0.15px #34363c;letter-spacing:0.000px;white-space:pre;">€1.41</span><span style="position:absolute;left:1432.80px;top:600.00px;font-size:15px;line-height:15px;font-weight:400;color:#34363c;-webkit-text-stroke:0.15px #34363c;letter-spacing:0.000px;white-space:pre;">0.31</span><div style="position:absolute;left:1572px;top:595.6650000000001px;width:34.2px;height:23px;background:#f68b1f;border-radius:11.5px"></div><span style="position:absolute;left:1581.31px;top:600.00px;font-size:14px;line-height:14px;font-weight:400;color:#fff;-webkit-text-stroke:0.25px #fff;letter-spacing:0.000px;white-space:pre;">74</span><span style="position:absolute;left:1720.40px;top:600.00px;font-size:15px;line-height:15px;font-weight:400;color:#34363c;-webkit-text-stroke:0.15px #34363c;letter-spacing:-0.310px;white-space:pre;">Show</span><div style="position:absolute;left:290.3px;top:643.895px;width:15.5px;height:15.5px;box-sizing:border-box;border:2px solid #2a2c33;border-radius:2.5px;background:#fff"></div><svg style="position:absolute;left:322.5px;top:645.595px;" width="8" height="12" viewBox="0 0 8 12"><path d="M1.5 1 L6.5 6 L1.5 11" fill="none" stroke="#5d6068" stroke-width="1.5" stroke-linecap="round" stroke-linejoin="round"/></svg><span style="position:absolute;left:345.40px;top:644.00px;font-size:15px;line-height:15px;font-weight:400;color:#34363c;-webkit-text-stroke:0.15px #34363c;letter-spacing:0.000px;white-space:pre;">keyword tool google</span><span style="position:absolute;left:775.44px;top:644.00px;font-size:15px;line-height:15px;font-weight:400;color:#34363c;-webkit-text-stroke:0.15px #34363c;letter-spacing:0.000px;white-space:pre;">1K</span><svg style="position:absolute;left:880px;top:640.395px;" width="80" height="23" viewBox="0 0 80 23"><polygon points="0,22.5 0.00,12.52 7.27,17.80 14.55,12.52 21.82,12.52 29.09,17.80 36.36,17.80 43.64,12.52 50.91,12.52 58.18,12.52 65.45,0.20 72.73,0.20 80.00,0.20 80,22.5" fill="#e6eff9"/><polyline points="0.00,12.52 7.27,17.80 14.55,12.52 21.82,12.52 29.09,17.80 36.36,17.80 43.64,12.52 50.91,12.52 58.18,12.52 65.45,0.20 72.73,0.20 80.00,0.20" fill="none" stroke="#567ca4" stroke-width="1.65" stroke-linejoin="round"/></svg><svg style="position:absolute;left:1042.45px;top:645.395px;" width="17.5" height="12.5" viewBox="0 0 17.5 12.5"><rect x="0" y="0" width="17.5" height="12.5" rx="3.6" fill="#1c1d24"/><path d="M7 3.6 L11.6 6.25 L7 8.9 Z" fill="#fff"/></svg><svg style="position:absolute;left:1075px;top:643.7950000000001px;" width="16" height="15.6" viewBox="0 0 16 15.6"><rect x="1" y="1" width="14" height="13.6" rx="1.5" fill="#1c1d24" stroke="#1c1d24" stroke-width="2"/><path d="M2 12.5 L5.5 7.8 L7.8 10.2 L10.5 7.2 L14 12.5 Z" fill="#fff"/></svg><svg style="position:absolute;left:1105.6px;top:642.595px;" width="18" height="18" viewBox="0 0 18 18"><polygon points="9.00,0.40 11.53,6.12 17.75,6.76 13.09,10.93 14.41,17.04 9.00,13.90 3.59,17.04 4.91,10.93 0.25,6.76 6.47,6.12" fill="#1c1d24"/></svg><svg style="position:absolute;left:1137.5px;top:645.395px;" width="17" height="12.5" viewBox="0 0 17 12.5"><path d="M0 1 H17 M0 4.5 H17 M0 8 H17 M0 11.5 H17" stroke="#1c1d24" stroke-width="2"/></svg><span style="position:absolute;left:1209.45px;top:644.00px;font-size:15px;line-height:15px;font-weight:400;color:#34363c;-webkit-text-stroke:0.15px #34363c;letter-spacing:0.000px;white-space:pre;">€1.41</span><span style="position:absolute;left:1432.80px;top:644.00px;font-size:15px;line-height:15px;font-weight:400;color:#34363c;-webkit-text-stroke:0.15px #34363c;letter-spacing:0.000px;white-space:pre;">0.31</span><div style="position:absolute;left:1572px;top:640.095px;width:34.2px;height:23px;background:#f68b1f;border-radius:11.5px"></div><span style="position:absolute;left:1581.31px;top:645.00px;font-size:14px;line-height:14px;font-weight:400;color:#fff;-webkit-text-stroke:0.25px #fff;letter-spacing:0.000px;white-space:pre;">73</span><span style="position:absolute;left:1720.40px;top:644.00px;font-size:15px;line-height:15px;font-weight:400;color:#34363c;-webkit-text-stroke:0.15px #34363c;letter-spacing:-0.310px;white-space:pre;">Show</span><div style="position:absolute;left:290.3px;top:688.3249999999999px;width:15.5px;height:15.5px;box-sizing:border-box;border:2px solid #2a2c33;border-radius:2.5px;background:#fff"></div><svg style="position:absolute;left:322.5px;top:690.025px;" width="8" height="12" viewBox="0 0 8 12"><path d="M1.5 1 L6.5 6 L1.5 11" fill="none" stroke="#5d6068" stroke-width="1.5" stroke-linecap="round" stroke-linejoin="round"/></svg><span style="position:absolute;left:345.40px;top:689.00px;font-size:15px;line-height:15px;font-weight:400;color:#34363c;-webkit-text-stroke:0.15px #34363c;letter-spacing:0.000px;white-space:pre;">keywords search tool</span><span style="position:absolute;left:768.77px;top:689.00px;font-size:15px;line-height:15px;font-weight:400;color:#34363c;-webkit-text-stroke:0.15px #34363c;letter-spacing:0.000px;white-space:pre;">950</span><svg style="position:absolute;left:880px;top:684.8249999999999px;" width="80" height="23" viewBox="0 0 80 23"><polygon points="0,22.5 0.00,17.80 7.27,17.80 14.55,10.76 21.82,14.28 29.09,10.76 36.36,10.76 43.64,5.83 50.91,0.20 58.18,0.20 65.45,0.20 72.73,5.48 80.00,0.20 80,22.5" fill="#e6eff9"/><polyline points="0.00,17.80 7.27,17.80 14.55,10.76 21.82,14.28 29.09,10.76 36.36,10.76 43.64,5.83 50.91,0.20 58.18,0.20 65.45,0.20 72.73,5.48 80.00,0.20" fill="none" stroke="#567ca4" stroke-width="1.65" stroke-linejoin="round"/></svg><svg style="position:absolute;left:1042.45px;top:686.525px;" width="17.5" height="19" viewBox="0 0 17.5 19"><path d="M0.5 1.3 H17" stroke="#1c1d24" stroke-width="1.6"/><circle cx="8.75" cy="9.5" r="7" fill="#1c1d24"/><path d="M11.3 6.5 C10.8 5.5 9.8 5.2 8.75 5.2 C7.3 5.2 6.4 6.0 6.4 7.2 C6.4 10.1 11.2 9.0 11.2 11.8 C11.2 13.1 10.2 13.8 8.75 13.8 C7.4 13.8 6.5 13.3 6.2 12.5" fill="none" stroke="#fff" stroke-width="1.9" stroke-linecap="round"/><path d="M8.75 3.9000000000000004 V15.1" stroke="#fff" stroke-width="1.5"/></svg><svg style="position:absolute;left:1074.25px;top:689.8249999999999px;" width="17.5" height="12.5" viewBox="0 0 17.5 12.5"><rect x="0" y="0" width="17.5" height="12.5" rx="3.6" fill="#1c1d24"/><path d="M7 3.6 L11.6 6.25 L7 8.9 Z" fill="#fff"/></svg><svg style="position:absolute;left:1105.6px;top:687.025px;" width="18" height="18" viewBox="0 0 18 18"><polygon points="9.00,0.40 11.53,6.12 17.75,6.76 13.09,10.93 14.41,17.04 9.00,13.90 3.59,17.04 4.91,10.93 0.25,6.76 6.47,6.12" fill="#1c1d24"/></svg><svg style="position:absolute;left:1137.5px;top:689.8249999999999px;" width="17" height="12.5" viewBox="0 0 17 12.5"><path d="M0 1 H17 M0 4.5 H17 M0 8 H17 M0 11.5 H17" stroke="#1c1d24" stroke-width="2"/></svg><span style="position:absolute;left:1217.80px;top:689.00px;font-size:15px;line-height:15px;font-weight:400;color:#34363c;-webkit-text-stroke:0.15px #34363c;letter-spacing:0.000px;white-space:pre;">€3.8</span><span style="position:absolute;left:1432.80px;top:689.00px;font-size:15px;line-height:15px;font-weight:400;color:#34363c;-webkit-text-stroke:0.15px #34363c;letter-spacing:0.000px;white-space:pre;">0.43</span><div style="position:absolute;left:1572px;top:684.525px;width:34.2px;height:23px;background:#d3411b;border-radius:11.5px"></div><span style="position:absolute;left:1581.31px;top:689.00px;font-size:14px;line-height:14px;font-weight:400;color:#fff;-webkit-text-stroke:0.25px #fff;letter-spacing:0.000px;white-space:pre;">81</span><span style="position:absolute;left:1720.40px;top:689.00px;font-size:15px;line-height:15px;font-weight:400;color:#34363c;-webkit-text-stroke:0.15px #34363c;letter-spacing:-0.310px;white-space:pre;">Show</span><div style="position:absolute;left:290.3px;top:732.755px;width:15.5px;height:15.5px;box-sizing:border-box;border:2px solid #2a2c33;border-radius:2.5px;background:#fff"></div><svg style="position:absolute;left:322.5px;top:734.455px;" width="8" height="12" viewBox="0 0 8 12"><path d="M1.5 1 L6.5 6 L1.5 11" fill="none" stroke="#5d6068" stroke-width="1.5" stroke-linecap="round" stroke-linejoin="round"/></svg><span style="position:absolute;left:345.40px;top:733.00px;font-size:15px;line-height:15px;font-weight:400;color:#34363c;-webkit-text-stroke:0.15px #34363c;letter-spacing:0.000px;white-space:pre;">keywords analyse tool</span><span style="position:absolute;left:768.77px;top:733.00px;font-size:15px;line-height:15px;font-weight:400;color:#34363c;-webkit-text-stroke:0.15px #34363c;letter-spacing:0.000px;white-space:pre;">950</span><svg style="position:absolute;left:880px;top:729.255px;" width="80" height="23" viewBox="0 0 80 23"><polygon points="0,22.5 0.00,13.58 7.27,17.80 14.55,17.80 21.82,17.80 29.09,17.80 36.36,6.36 43.64,0.20 50.91,6.89 58.18,13.40 65.45,13.40 72.73,13.40 80.00,7.42 80,22.5" fill="#e6eff9"/><polyline points="0.00,13.58 7.27,17.80 14.55,17.80 21.82,17.80 29.09,17.80 36.36,6.36 43.64,0.20 50.91,6.89 58.18,13.40 65.45,13.40 72.73,13.40 80.00,7.42" fill="none" stroke="#567ca4" stroke-width="1.65" stroke-linejoin="round"/></svg><svg style="position:absolute;left:1042.45px;top:734.255px;" width="17.5" height="12.5" viewBox="0 0 17.5 12.5"><rect x="0" y="0" width="17.5" height="12.5" rx="3.6" fill="#1c1d24"/><path d="M7 3.6 L11.6 6.25 L7 8.9 Z" fill="#fff"/></svg><svg style="position:absolute;left:1074px;top:731.455px;" width="18" height="18" viewBox="0 0 18 18"><polygon points="9.00,0.40 11.53,6.12 17.75,6.76 13.09,10.93 14.41,17.04 9.00,13.90 3.59,17.04 4.91,10.93 0.25,6.76 6.47,6.12" fill="#1c1d24"/></svg><svg style="position:absolute;left:1106.1px;top:734.255px;" width="17" height="12.5" viewBox="0 0 17 12.5"><path d="M0 1 H17 M0 4.5 H17 M0 8 H17 M0 11.5 H17" stroke="#1c1d24" stroke-width="2"/></svg><svg style="position:absolute;left:1137.25px;top:730.955px;" width="17.5" height="19" viewBox="0 0 17.5 19"><path d="M0.5 17.5 H17" stroke="#1c1d24" stroke-width="1.6"/><circle cx="8.75" cy="7.2" r="7" fill="#1c1d24"/><path d="M11.3 4.2 C10.8 3.2 9.8 2.9000000000000004 8.75 2.9000000000000004 C7.3 2.9000000000000004 6.4 3.7 6.4 4.9 C6.4 7.8 11.2 6.7 11.2 9.5 C11.2 10.8 10.2 11.5 8.75 11.5 C7.4 11.5 6.5 11.0 6.2 10.2" fill="none" stroke="#fff" stroke-width="1.9" stroke-linecap="round"/><path d="M8.75 1.6000000000000005 V12.8" stroke="#fff" stroke-width="1.5"/></svg><span style="position:absolute;left:1209.45px;top:733.00px;font-size:15px;line-height:15px;font-weight:400;color:#34363c;-webkit-text-stroke:0.15px #34363c;letter-spacing:0.000px;white-space:pre;">€6.75</span><span style="position:absolute;left:1432.80px;top:733.00px;font-size:15px;line-height:15px;font-weight:400;color:#34363c;-webkit-text-stroke:0.15px #34363c;letter-spacing:0.000px;white-space:pre;">0.49</span><div style="position:absolute;left:1572px;top:728.955px;width:34.2px;height:23px;background:#f68b1f;border-radius:11.5px"></div><span style="position:absolute;left:1581.31px;top:733.00px;font-size:14px;line-height:14px;font-weight:400;color:#fff;-webkit-text-stroke:0.25px #fff;letter-spacing:0.000px;white-space:pre;">67</span><span style="position:absolute;left:1720.40px;top:733.00px;font-size:15px;line-height:15px;font-weight:400;color:#34363c;-webkit-text-stroke:0.15px #34363c;letter-spacing:-0.310px;white-space:pre;">Show</span><div style="position:absolute;left:290.3px;top:777.1850000000001px;width:15.5px;height:15.5px;box-sizing:border-box;border:2px solid #2a2c33;border-radius:2.5px;background:#fff"></div><svg style="position:absolute;left:322.5px;top:778.8850000000001px;" width="8" height="12" viewBox="0 0 8 12"><path d="M1.5 1 L6.5 6 L1.5 11" fill="none" stroke="#5d6068" stroke-width="1.5" stroke-linecap="round" stroke-linejoin="round"/></svg><span style="position:absolute;left:345.40px;top:777.00px;font-size:15px;line-height:15px;font-weight:400;color:#34363c;-webkit-text-stroke:0.15px #34363c;letter-spacing:0.000px;white-space:pre;">keyword recherche tool</span><span style="position:absolute;left:768.77px;top:777.00px;font-size:15px;line-height:15px;font-weight:400;color:#34363c;-webkit-text-stroke:0.15px #34363c;letter-spacing:0.000px;white-space:pre;">480</span><svg style="position:absolute;left:880px;top:773.6850000000001px;" width="80" height="23" viewBox="0 0 80 23"><polygon points="0,22.5 0.00,0.20 7.27,0.20 14.55,0.20 21.82,17.80 29.09,17.80 36.36,0.20 43.64,17.80 50.91,0.20 58.18,17.80 65.45,0.20 72.73,17.80 80.00,17.80 80,22.5" fill="#e6eff9"/><polyline points="0.00,0.20 7.27,0.20 14.55,0.20 21.82,17.80 29.09,17.80 36.36,0.20 43.64,17.80 50.91,0.20 58.18,17.80 65.45,0.20 72.73,17.80 80.00,17.80" fill="none" stroke="#567ca4" stroke-width="1.65" stroke-linejoin="round"/></svg><svg style="position:absolute;left:1042.45px;top:778.6850000000001px;" width="17.5" height="12.5" viewBox="0 0 17.5 12.5"><rect x="0" y="0" width="17.5" height="12.5" rx="3.6" fill="#1c1d24"/><path d="M7 3.6 L11.6 6.25 L7 8.9 Z" fill="#fff"/></svg><svg style="position:absolute;left:1074px;top:775.8850000000001px;" width="18" height="18" viewBox="0 0 18 18"><polygon points="9.00,0.40 11.53,6.12 17.75,6.76 13.09,10.93 14.41,17.04 9.00,13.90 3.59,17.04 4.91,10.93 0.25,6.76 6.47,6.12" fill="#1c1d24"/></svg><svg style="position:absolute;left:1106.1px;top:778.6850000000001px;" width="17" height="12.5" viewBox="0 0 17 12.5"><path d="M0 1 H17 M0 4.5 H17 M0 8 H17 M0 11.5 H17" stroke="#1c1d24" stroke-width="2"/></svg><span style="position:absolute;left:1209.45px;top:777.00px;font-size:15px;line-height:15px;font-weight:400;color:#34363c;-webkit-text-stroke:0.15px #34363c;letter-spacing:0.000px;white-space:pre;">€2.04</span><span style="position:absolute;left:1432.80px;top:777.00px;font-size:15px;line-height:15px;font-weight:400;color:#34363c;-webkit-text-stroke:0.15px #34363c;letter-spacing:0.000px;white-space:pre;">0.48</span><div style="position:absolute;left:1572px;top:773.3850000000001px;width:34.2px;height:23px;background:#f68b1f;border-radius:11.5px"></div><span style="position:absolute;left:1581.31px;top:778.00px;font-size:14px;line-height:14px;font-weight:400;color:#fff;-webkit-text-stroke:0.25px #fff;letter-spacing:0.000px;white-space:pre;">69</span><span style="position:absolute;left:1720.40px;top:777.00px;font-size:15px;line-height:15px;font-weight:400;color:#34363c;-webkit-text-stroke:0.15px #34363c;letter-spacing:-0.310px;white-space:pre;">Show</span><div style="position:absolute;left:290.3px;top:821.615px;width:15.5px;height:15.5px;box-sizing:border-box;border:2px solid #2a2c33;border-radius:2.5px;background:#fff"></div><svg style="position:absolute;left:322.5px;top:823.315px;" width="8" height="12" viewBox="0 0 8 12"><path d="M1.5 1 L6.5 6 L1.5 11" fill="none" stroke="#5d6068" stroke-width="1.5" stroke-linecap="round" stroke-linejoin="round"/></svg><span style="position:absolute;left:345.40px;top:822.00px;font-size:15px;line-height:15px;font-weight:400;color:#34363c;-webkit-text-stroke:0.15px #34363c;letter-spacing:0.000px;white-space:pre;">keyword tool kostenlos</span><span style="position:absolute;left:768.77px;top:822.00px;font-size:15px;line-height:15px;font-weight:400;color:#34363c;-webkit-text-stroke:0.15px #34363c;letter-spacing:0.000px;white-space:pre;">480</span><svg style="position:absolute;left:880px;top:818.115px;" width="80" height="23" viewBox="0 0 80 23"><polygon points="0,22.5 0.00,10.23 7.27,10.23 14.55,10.23 21.82,10.23 29.09,17.80 36.36,9.00 43.64,0.20 50.91,0.20 58.18,10.23 65.45,0.20 72.73,10.23 80.00,10.23 80,22.5" fill="#e6eff9"/><polyline points="0.00,10.23 7.27,10.23 14.55,10.23 21.82,10.23 29.09,17.80 36.36,9.00 43.64,0.20 50.91,0.20 58.18,10.23 65.45,0.20 72.73,10.23 80.00,10.23" fill="none" stroke="#567ca4" stroke-width="1.65" stroke-linejoin="round"/></svg><svg style="position:absolute;left:1042.45px;top:823.115px;" width="17.5" height="12.5" viewBox="0 0 17.5 12.5"><rect x="0" y="0" width="17.5" height="12.5" rx="3.6" fill="#1c1d24"/><path d="M7 3.6 L11.6 6.25 L7 8.9 Z" fill="#fff"/></svg><svg style="position:absolute;left:1074px;top:820.315px;" width="18" height="18" viewBox="0 0 18 18"><polygon points="9.00,0.40 11.53,6.12 17.75,6.76 13.09,10.93 14.41,17.04 9.00,13.90 3.59,17.04 4.91,10.93 0.25,6.76 6.47,6.12" fill="#1c1d24"/></svg><svg style="position:absolute;left:1106.1px;top:823.115px;" width="17" height="12.5" viewBox="0 0 17 12.5"><path d="M0 1 H17 M0 4.5 H17 M0 8 H17 M0 11.5 H17" stroke="#1c1d24" stroke-width="2"/></svg><svg style="position:absolute;left:1137.25px;top:819.815px;" width="17.5" height="19" viewBox="0 0 17.5 19"><path d="M0.5 17.5 H17" stroke="#1c1d24" stroke-width="1.6"/><circle cx="8.75" cy="7.2" r="7" fill="#1c1d24"/><path d="M11.3 4.2 C10.8 3.2 9.8 2.9000000000000004 8.75 2.9000000000000004 C7.3 2.9000000000000004 6.4 3.7 6.4 4.9 C6.4 7.8 11.2 6.7 11.2 9.5 C11.2 10.8 10.2 11.5 8.75 11.5 C7.4 11.5 6.5 11.0 6.2 10.2" fill="none" stroke="#fff" stroke-width="1.9" stroke-linecap="round"/><path d="M8.75 1.6000000000000005 V12.8" stroke="#fff" stroke-width="1.5"/></svg><span style="position:absolute;left:1209.45px;top:822.00px;font-size:15px;line-height:15px;font-weight:400;color:#34363c;-webkit-text-stroke:0.15px #34363c;letter-spacing:0.000px;white-space:pre;">€1.05</span><span style="position:absolute;left:1432.80px;top:822.00px;font-size:15px;line-height:15px;font-weight:400;color:#34363c;-webkit-text-stroke:0.15px #34363c;letter-spacing:0.000px;white-space:pre;">0.48</span><div style="position:absolute;left:1572px;top:817.815px;width:34.2px;height:23px;background:#f68b1f;border-radius:11.5px"></div><span style="position:absolute;left:1581.31px;top:822.00px;font-size:14px;line-height:14px;font-weight:400;color:#fff;-webkit-text-stroke:0.25px #fff;letter-spacing:0.000px;white-space:pre;">65</span><span style="position:absolute;left:1720.40px;top:822.00px;font-size:15px;line-height:15px;font-weight:400;color:#34363c;-webkit-text-stroke:0.15px #34363c;letter-spacing:-0.310px;white-space:pre;">Show</span><div style="position:absolute;left:290.3px;top:866.045px;width:15.5px;height:15.5px;box-sizing:border-box;border:2px solid #2a2c33;border-radius:2.5px;background:#fff"></div><svg style="position:absolute;left:322.5px;top:867.745px;" width="8" height="12" viewBox="0 0 8 12"><path d="M1.5 1 L6.5 6 L1.5 11" fill="none" stroke="#5d6068" stroke-width="1.5" stroke-linecap="round" stroke-linejoin="round"/></svg><span style="position:absolute;left:345.40px;top:866.00px;font-size:15px;line-height:15px;font-weight:400;color:#34363c;-webkit-text-stroke:0.15px #34363c;letter-spacing:0.000px;white-space:pre;">keyword tools kostenlos</span><span style="position:absolute;left:768.77px;top:866.00px;font-size:15px;line-height:15px;font-weight:400;color:#34363c;-webkit-text-stroke:0.15px #34363c;letter-spacing:0.000px;white-space:pre;">480</span><svg style="position:absolute;left:880px;top:862.545px;" width="80" height="23" viewBox="0 0 80 23"><polygon points="0,22.5 0.00,10.23 7.27,10.23 14.55,10.23 21.82,10.23 29.09,17.80 36.36,9.00 43.64,0.20 50.91,0.20 58.18,10.23 65.45,0.20 72.73,10.23 80.00,10.23 80,22.5" fill="#e6eff9"/><polyline points="0.00,10.23 7.27,10.23 14.55,10.23 21.82,10.23 29.09,17.80 36.36,9.00 43.64,0.20 50.91,0.20 58.18,10.23 65.45,0.20 72.73,10.23 80.00,10.23" fill="none" stroke="#567ca4" stroke-width="1.65" stroke-linejoin="round"/></svg><svg style="position:absolute;left:1042.45px;top:867.545px;" width="17.5" height="12.5" viewBox="0 0 17.5 12.5"><rect x="0" y="0" width="17.5" height="12.5" rx="3.6" fill="#1c1d24"/><path d="M7 3.6 L11.6 6.25 L7 8.9 Z" fill="#fff"/></svg><svg style="position:absolute;left:1074px;top:864.745px;" width="18" height="18" viewBox="0 0 18 18"><polygon points="9.00,0.40 11.53,6.12 17.75,6.76 13.09,10.93 14.41,17.04 9.00,13.90 3.59,17.04 4.91,10.93 0.25,6.76 6.47,6.12" fill="#1c1d24"/></svg><svg style="position:absolute;left:1106.1px;top:867.545px;" width="17" height="12.5" viewBox="0 0 17 12.5"><path d="M0 1 H17 M0 4.5 H17 M0 8 H17 M0 11.5 H17" stroke="#1c1d24" stroke-width="2"/></svg><svg style="position:absolute;left:1137.25px;top:864.245px;" width="17.5" height="19" viewBox="0 0 17.5 19"><path d="M0.5 17.5 H17" stroke="#1c1d24" stroke-width="1.6"/><circle cx="8.75" cy="7.2" r="7" fill="#1c1d24"/><path d="M11.3 4.2 C10.8 3.2 9.8 2.9000000000000004 8.75 2.9000000000000004 C7.3 2.9000000000000004 6.4 3.7 6.4 4.9 C6.4 7.8 11.2 6.7 11.2 9.5 C11.2 10.8 10.2 11.5 8.75 11.5 C7.4 11.5 6.5 11.0 6.2 10.2" fill="none" stroke="#fff" stroke-width="1.9" stroke-linecap="round"/><path d="M8.75 1.6000000000000005 V12.8" stroke="#fff" stroke-width="1.5"/></svg><span style="position:absolute;left:1209.45px;top:866.00px;font-size:15px;line-height:15px;font-weight:400;color:#34363c;-webkit-text-stroke:0.15px #34363c;letter-spacing:0.000px;white-space:pre;">€1.05</span><span style="position:absolute;left:1432.80px;top:866.00px;font-size:15px;line-height:15px;font-weight:400;color:#34363c;-webkit-text-stroke:0.15px #34363c;letter-spacing:0.000px;white-space:pre;">0.48</span><div style="position:absolute;left:1572px;top:862.245px;width:34.2px;height:23px;background:#f68b1f;border-radius:11.5px"></div><span style="position:absolute;left:1581.31px;top:867.00px;font-size:14px;line-height:14px;font-weight:400;color:#fff;-webkit-text-stroke:0.25px #fff;letter-spacing:0.000px;white-space:pre;">65</span><span style="position:absolute;left:1720.40px;top:866.00px;font-size:15px;line-height:15px;font-weight:400;color:#34363c;-webkit-text-stroke:0.15px #34363c;letter-spacing:-0.310px;white-space:pre;">Show</span><div style="position:absolute;left:290.3px;top:910.475px;width:15.5px;height:15.5px;box-sizing:border-box;border:2px solid #2a2c33;border-radius:2.5px;background:#fff"></div><svg style="position:absolute;left:322.5px;top:912.1750000000001px;" width="8" height="12" viewBox="0 0 8 12"><path d="M1.5 1 L6.5 6 L1.5 11" fill="none" stroke="#5d6068" stroke-width="1.5" stroke-linecap="round" stroke-linejoin="round"/></svg><span style="position:absolute;left:345.40px;top:911.00px;font-size:15px;line-height:15px;font-weight:400;color:#34363c;-webkit-text-stroke:0.15px #34363c;letter-spacing:0.000px;white-space:pre;">keyword planner tools</span><span style="position:absolute;left:768.77px;top:911.00px;font-size:15px;line-height:15px;font-weight:400;color:#34363c;-webkit-text-stroke:0.15px #34363c;letter-spacing:0.000px;white-space:pre;">390</span><svg style="position:absolute;left:880px;top:906.975px;" width="80" height="23" viewBox="0 0 80 23"><polygon points="0,22.5 0.00,9.88 7.27,5.48 14.55,6.01 21.82,17.80 29.09,6.01 36.36,13.58 43.64,10.06 50.91,6.18 58.18,0.20 65.45,0.20 72.73,0.20 80.00,5.48 80,22.5" fill="#e6eff9"/><polyline points="0.00,9.88 7.27,5.48 14.55,6.01 21.82,17.80 29.09,6.01 36.36,13.58 43.64,10.06 50.91,6.18 58.18,0.20 65.45,0.20 72.73,0.20 80.00,5.48" fill="none" stroke="#567ca4" stroke-width="1.65" stroke-linejoin="round"/></svg><svg style="position:absolute;left:1042.45px;top:911.975px;" width="17.5" height="12.5" viewBox="0 0 17.5 12.5"><rect x="0" y="0" width="17.5" height="12.5" rx="3.6" fill="#1c1d24"/><path d="M7 3.6 L11.6 6.25 L7 8.9 Z" fill="#fff"/></svg><svg style="position:absolute;left:1074px;top:909.1750000000001px;" width="18" height="18" viewBox="0 0 18 18"><polygon points="9.00,0.40 11.53,6.12 17.75,6.76 13.09,10.93 14.41,17.04 9.00,13.90 3.59,17.04 4.91,10.93 0.25,6.76 6.47,6.12" fill="#1c1d24"/></svg><svg style="position:absolute;left:1106.1px;top:911.975px;" width="17" height="12.5" viewBox="0 0 17 12.5"><path d="M0 1 H17 M0 4.5 H17 M0 8 H17 M0 11.5 H17" stroke="#1c1d24" stroke-width="2"/></svg><span style="position:absolute;left:1201.11px;top:911.00px;font-size:15px;line-height:15px;font-weight:400;color:#34363c;-webkit-text-stroke:0.15px #34363c;letter-spacing:0.000px;white-space:pre;">€10.05</span><span style="position:absolute;left:1441.14px;top:911.00px;font-size:15px;line-height:15px;font-weight:400;color:#34363c;-webkit-text-stroke:0.15px #34363c;letter-spacing:0.000px;white-space:pre;">0.5</span><div style="position:absolute;left:1572px;top:906.6750000000001px;width:34.2px;height:23px;background:#d3411b;border-radius:11.5px"></div><span style="position:absolute;left:1581.31px;top:911.00px;font-size:14px;line-height:14px;font-weight:400;color:#fff;-webkit-text-stroke:0.25px #fff;letter-spacing:0.000px;white-space:pre;">76</span><span style="position:absolute;left:1720.40px;top:911.00px;font-size:15px;line-height:15px;font-weight:400;color:#34363c;-webkit-text-stroke:0.15px #34363c;letter-spacing:-0.310px;white-space:pre;">Show</span><div style="position:absolute;left:290.3px;top:954.9050000000001px;width:15.5px;height:15.5px;box-sizing:border-box;border:2px solid #2a2c33;border-radius:2.5px;background:#fff"></div><svg style="position:absolute;left:322.5px;top:956.6050000000001px;" width="8" height="12" viewBox="0 0 8 12"><path d="M1.5 1 L6.5 6 L1.5 11" fill="none" stroke="#5d6068" stroke-width="1.5" stroke-linecap="round" stroke-linejoin="round"/></svg><span style="position:absolute;left:345.40px;top:955.00px;font-size:15px;line-height:15px;font-weight:400;color:#34363c;-webkit-text-stroke:0.15px #34363c;letter-spacing:0.000px;white-space:pre;">youtube keyword tool</span><span style="position:absolute;left:768.77px;top:955.00px;font-size:15px;line-height:15px;font-weight:400;color:#34363c;-webkit-text-stroke:0.15px #34363c;letter-spacing:0.000px;white-space:pre;">390</span><svg style="position:absolute;left:880px;top:951.4050000000001px;" width="80" height="23" viewBox="0 0 80 23"><polygon points="0,22.5 0.00,0.20 7.27,12.34 14.55,12.34 21.82,12.34 29.09,17.80 36.36,17.80 43.64,12.70 50.91,17.27 58.18,12.70 65.45,12.70 72.73,17.80 80.00,17.80 80,22.5" fill="#e6eff9"/><polyline points="0.00,0.20 7.27,12.34 14.55,12.34 21.82,12.34 29.09,17.80 36.36,17.80 43.64,12.70 50.91,17.27 58.18,12.70 65.45,12.70 72.73,17.80 80.00,17.80" fill="none" stroke="#567ca4" stroke-width="1.65" stroke-linejoin="round"/></svg><svg style="position:absolute;left:1043.0px;top:955.3050000000002px;" width="16.4" height="14.5" viewBox="0 0 16.4 14.5"><rect x="0" y="0" width="16.4" height="3" fill="#1c1d24"/><path d="M0 6 H6.8 M9.6 6 H16.4 M0 9.6 H6.8 M9.6 9.6 H16.4 M0 13.2 H6.8 M9.6 13.2 H16.4" stroke="#1c1d24" stroke-width="2"/></svg><svg style="position:absolute;left:1074.25px;top:956.4050000000001px;" width="17.5" height="12.5" viewBox="0 0 17.5 12.5"><rect x="0" y="0" width="17.5" height="12.5" rx="3.6" fill="#1c1d24"/><path d="M7 3.6 L11.6 6.25 L7 8.9 Z" fill="#fff"/></svg><svg style="position:absolute;left:1105.6px;top:953.6050000000001px;" width="18" height="18" viewBox="0 0 18 18"><polygon points="9.00,0.40 11.53,6.12 17.75,6.76 13.09,10.93 14.41,17.04 9.00,13.90 3.59,17.04 4.91,10.93 0.25,6.76 6.47,6.12" fill="#1c1d24"/></svg><div style="position:absolute;left:1136.4px;top:952.6050000000001px;width:19.3px;height:20px;box-sizing:border-box;border:1.8px solid #dcdce0;border-radius:4px;background:#fff"></div><svg style="position:absolute;left:1140.5px;top:961.1050000000001px;" width="11" height="3" viewBox="0 0 11 3"><circle cx="1.4" cy="1.5" r="1.35" fill="#1c1d24"/><circle cx="5.5" cy="1.5" r="1.35" fill="#1c1d24"/><circle cx="9.6" cy="1.5" r="1.35" fill="#1c1d24"/></svg><span style="position:absolute;left:1209.45px;top:955.00px;font-size:15px;line-height:15px;font-weight:400;color:#34363c;-webkit-text-stroke:0.15px #34363c;letter-spacing:0.000px;white-space:pre;">€0.77</span><span style="position:absolute;left:1432.80px;top:955.00px;font-size:15px;line-height:15px;font-weight:400;color:#34363c;-webkit-text-stroke:0.15px #34363c;letter-spacing:0.000px;white-space:pre;">0.21</span><div style="position:absolute;left:1572px;top:951.1050000000001px;width:34.2px;height:23px;background:#f4c51a;border-radius:11.5px"></div><span style="position:absolute;left:1581.31px;top:956.00px;font-size:14px;line-height:14px;font-weight:400;color:#fff;-webkit-text-stroke:0.25px #fff;letter-spacing:0.000px;white-space:pre;">42</span><span style="position:absolute;left:1720.40px;top:955.00px;font-size:15px;line-height:15px;font-weight:400;color:#34363c;-webkit-text-stroke:0.15px #34363c;letter-spacing:-0.310px;white-space:pre;">Show</span><div style="position:absolute;left:290.3px;top:999.3349999999999px;width:15.5px;height:15.5px;box-sizing:border-box;border:2px solid #2a2c33;border-radius:2.5px;background:#fff"></div><svg style="position:absolute;left:322.5px;top:1001.035px;" width="8" height="12" viewBox="0 0 8 12"><path d="M1.5 1 L6.5 6 L1.5 11" fill="none" stroke="#5d6068" stroke-width="1.5" stroke-linecap="round" stroke-linejoin="round"/></svg><span style="position:absolute;left:345.40px;top:1000.00px;font-size:15px;line-height:15px;font-weight:400;color:#34363c;-webkit-text-stroke:0.15px #34363c;letter-spacing:0.000px;white-space:pre;">youtube keyword tools</span><span style="position:absolute;left:768.77px;top:1000.00px;font-size:15px;line-height:15px;font-weight:400;color:#34363c;-webkit-text-stroke:0.15px #34363c;letter-spacing:0.000px;white-space:pre;">390</span><svg style="position:absolute;left:880px;top:995.8349999999999px;" width="80" height="23" viewBox="0 0 80 23"><polygon points="0,22.5 0.00,0.20 7.27,12.34 14.55,12.34 21.82,12.34 29.09,17.80 36.36,17.80 43.64,12.70 50.91,17.27 58.18,12.70 65.45,12.70 72.73,17.80 80.00,17.80 80,22.5" fill="#e6eff9"/><polyline points="0.00,0.20 7.27,12.34 14.55,12.34 21.82,12.34 29.09,17.80 36.36,17.80 43.64,12.70 50.91,17.27 58.18,12.70 65.45,12.70 72.73,17.80 80.00,17.80" fill="none" stroke="#567ca4" stroke-width="1.65" stroke-linejoin="round"/></svg><svg style="position:absolute;left:1042.45px;top:1000.8349999999999px;" width="17.5" height="12.5" viewBox="0 0 17.5 12.5"><rect x="0" y="0" width="17.5" height="12.5" rx="3.6" fill="#1c1d24"/><path d="M7 3.6 L11.6 6.25 L7 8.9 Z" fill="#fff"/></svg><svg style="position:absolute;left:1074px;top:998.035px;" width="18" height="18" viewBox="0 0 18 18"><polygon points="9.00,0.40 11.53,6.12 17.75,6.76 13.09,10.93 14.41,17.04 9.00,13.90 3.59,17.04 4.91,10.93 0.25,6.76 6.47,6.12" fill="#1c1d24"/></svg><svg style="position:absolute;left:1106.1px;top:1000.8349999999999px;" width="17" height="12.5" viewBox="0 0 17 12.5"><path d="M0 1 H17 M0 4.5 H17 M0 8 H17 M0 11.5 H17" stroke="#1c1d24" stroke-width="2"/></svg><span style="position:absolute;left:1209.45px;top:1000.00px;font-size:15px;line-height:15px;font-weight:400;color:#34363c;-webkit-text-stroke:0.15px #34363c;letter-spacing:0.000px;white-space:pre;">€0.77</span><span style="position:absolute;left:1432.80px;top:1000.00px;font-size:15px;line-height:15px;font-weight:400;color:#34363c;-webkit-text-stroke:0.15px #34363c;letter-spacing:0.000px;white-space:pre;">0.21</span><div style="position:absolute;left:1572px;top:995.535px;width:34.2px;height:23px;background:#f4c51a;border-radius:11.5px"></div><span style="position:absolute;left:1581.31px;top:1000.00px;font-size:14px;line-height:14px;font-weight:400;color:#fff;-webkit-text-stroke:0.25px #fff;letter-spacing:0.000px;white-space:pre;">54</span><span style="position:absolute;left:1720.40px;top:1000.00px;font-size:15px;line-height:15px;font-weight:400;color:#34363c;-webkit-text-stroke:0.15px #34363c;letter-spacing:-0.310px;white-space:pre;">Show</span>
</body></html>
